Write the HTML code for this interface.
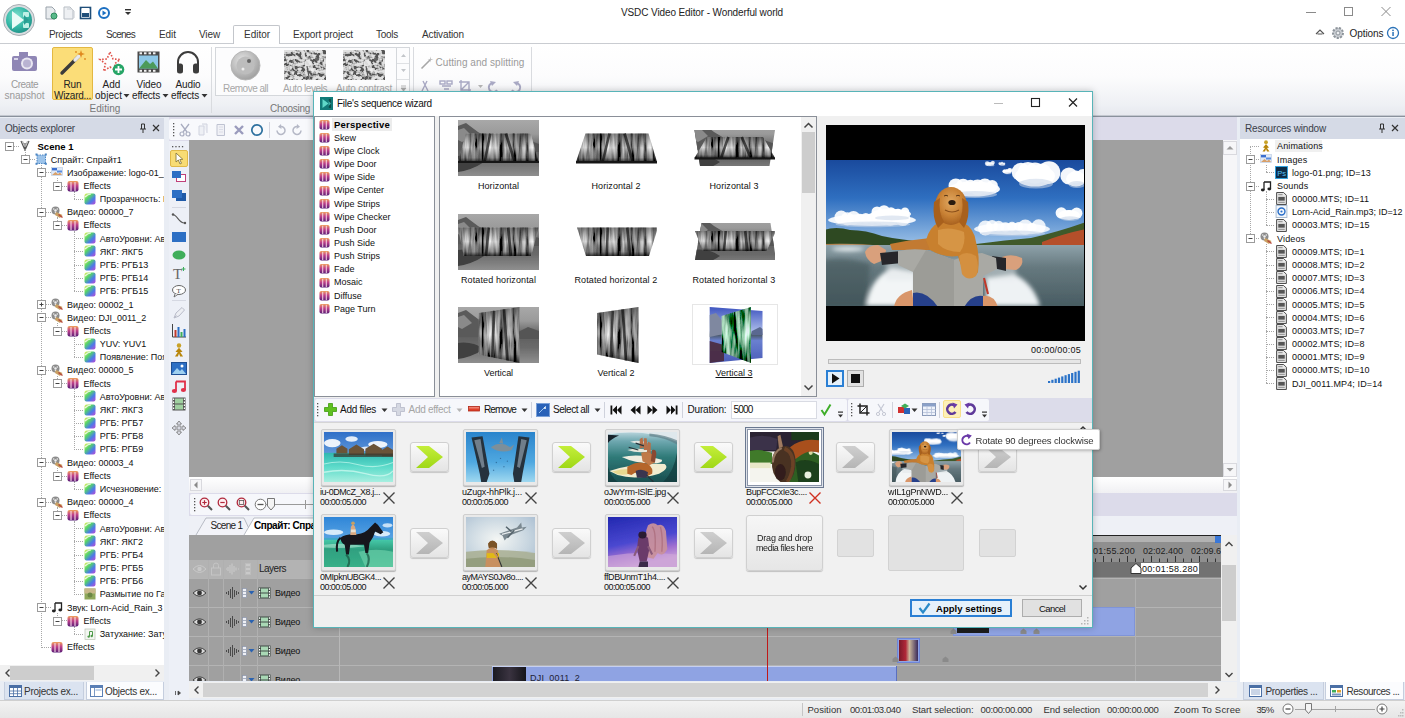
<!DOCTYPE html>
<html><head><meta charset="utf-8"><title>VSDC Video Editor - Wonderful world</title>
<style>
html,body{margin:0;padding:0}
body{width:1405px;height:718px;overflow:hidden;position:relative;background:#fff;font-family:"Liberation Sans",sans-serif;font-size:10px;color:#000}
div,span,svg{box-sizing:border-box}
svg{overflow:visible}
</style></head><body>
<svg width="0" height="0" style="position:absolute"><defs>
<pattern id="spk" width="7" height="6" patternUnits="userSpaceOnUse"><rect x="1" y="1" width="2" height="2" fill="#777"/><rect x="4" y="3" width="2" height="2" fill="#e2e2e2"/></pattern>
<linearGradient id="fxg" x1="0" y1="0" x2="0" y2="1"><stop offset="0" stop-color="#f0a35a"/><stop offset=".45" stop-color="#c0408a"/><stop offset="1" stop-color="#5a1f78"/></linearGradient><linearGradient id="clg" x1="0" y1="0" x2="1" y2="1"><stop offset="0" stop-color="#f3f36a"/><stop offset=".35" stop-color="#57d46a"/><stop offset=".65" stop-color="#4a7be8"/><stop offset="1" stop-color="#c04ad8"/></linearGradient>
<linearGradient id="ag" x1="0" y1="0" x2="0" y2="1"><stop offset="0" stop-color="#c4ee3a"/><stop offset="1" stop-color="#9fd816"/></linearGradient><linearGradient id="agg" x1="0" y1="0" x2="0" y2="1"><stop offset="0" stop-color="#cfcfcf"/><stop offset="1" stop-color="#b5b5b5"/></linearGradient>
<filter id="soft" x="-5%" y="-5%" width="110%" height="110%"><feGaussianBlur stdDeviation="0.55"/></filter><filter id="soft2" x="-5%" y="-5%" width="110%" height="110%"><feGaussianBlur stdDeviation="0.6"/></filter>
</defs></svg>
<div style="position:absolute;left:0px;top:0px;width:1405px;height:44px;background:#fff;"></div>
<div style="position:absolute;left:0px;top:44px;width:1405px;height:72px;background:linear-gradient(#fff,#fcfcfd 45%,#eef0f4 85%,#e6e8ee);"></div>
<div style="position:absolute;left:0px;top:43px;width:1405px;height:1px;background:#c9ccd1;"></div>
<div style="position:absolute;left:0px;top:115px;width:1405px;height:1px;background:#c3c7cf;"></div>
<div style="position:absolute;left:0px;top:116px;width:1405px;height:1px;background:#8a919c;"></div>
<div style="position:absolute;left:233px;top:25px;width:47px;height:19px;background:#fff;border:1px solid #c3c6cb;border-bottom:none;box-sizing:border-box;border-radius:2px 2px 0 0;"></div>
<span style="position:absolute;left:621.0px;top:6.8px;font-size:10px;line-height:12px;color:#222;white-space:nowrap;letter-spacing:-0.11px;">VSDC Video Editor - Wonderful world</span>
<span style="position:absolute;left:49.0px;top:28.8px;font-size:10px;line-height:12px;color:#333;white-space:nowrap;letter-spacing:-0.39px;">Projects</span>
<span style="position:absolute;left:106.0px;top:28.8px;font-size:10px;line-height:12px;color:#333;white-space:nowrap;letter-spacing:-0.73px;">Scenes</span>
<span style="position:absolute;left:159.0px;top:28.8px;font-size:10px;line-height:12px;color:#333;white-space:nowrap;letter-spacing:-0.06px;">Edit</span>
<span style="position:absolute;left:199.0px;top:28.8px;font-size:10px;line-height:12px;color:#333;white-space:nowrap;letter-spacing:-0.12px;">View</span>
<span style="position:absolute;left:244.0px;top:28.8px;font-size:10px;line-height:12px;color:#333;white-space:nowrap;letter-spacing:-0.02px;">Editor</span>
<span style="position:absolute;left:293.0px;top:28.8px;font-size:10px;line-height:12px;color:#333;white-space:nowrap;letter-spacing:-0.12px;">Export project</span>
<span style="position:absolute;left:376.0px;top:28.8px;font-size:10px;line-height:12px;color:#333;white-space:nowrap;letter-spacing:-0.27px;">Tools</span>
<span style="position:absolute;left:422.0px;top:28.8px;font-size:10px;line-height:12px;color:#333;white-space:nowrap;letter-spacing:-0.14px;">Activation</span>
<svg style="position:absolute;left:2px;top:3px;" width="34" height="34" viewBox="0 0 34 34"><defs><radialGradient id="lg" cx="40%" cy="35%" r="70%"><stop offset="0" stop-color="#7fe0cf"/><stop offset="0.6" stop-color="#35b8a6"/><stop offset="1" stop-color="#1f8f86"/></radialGradient></defs>
<circle cx="17" cy="17" r="15.5" fill="#d9dde0" stroke="#a9afb4"/><circle cx="17" cy="17" r="13" fill="url(#lg)"/>
<path d="M10 8 L10 26 L22 17 Z" fill="#e8fbf7"/><rect x="21" y="9" width="6" height="5" rx="1" fill="#bff0e6"/><rect x="21" y="20" width="6" height="5" rx="1" fill="#bff0e6"/><path d="M22 12 L27 17 L22 22Z" fill="#2a9d92"/></svg>
<svg style="position:absolute;left:43px;top:5px;" width="18" height="16" viewBox="0 0 18 16"><path d="M3 2 H9 L12 5 V14 H3Z" fill="#e8ebee" stroke="#9aa3ab"/><circle cx="11" cy="11" r="3" fill="#58b98a" stroke="#2f8c5e"/></svg>
<svg style="position:absolute;left:61px;top:5px;" width="18" height="16" viewBox="0 0 18 16"><path d="M3 2 H9 L12 5 V14 H3Z" fill="#eef0f3" stroke="#b7bdc4"/><path d="M6 4 H11 L13 6 V13" fill="none" stroke="#c5cad0"/></svg>
<svg style="position:absolute;left:79px;top:5px;" width="14" height="16" viewBox="0 0 14 16"><rect x="1.5" y="2.5" width="10" height="11" fill="#fff" stroke="#1f4e79" stroke-width="1.6"/><rect x="3" y="8" width="7" height="4" fill="#1f4e79"/><rect x="3" y="3" width="7" height="3" fill="#fff"/></svg>
<svg style="position:absolute;left:97px;top:5px;" width="14" height="16" viewBox="0 0 14 16"><circle cx="7" cy="8" r="5" fill="#fff" stroke="#1b6fc2" stroke-width="2"/><path d="M5.5 5.5 L9.5 8 L5.5 10.5Z" fill="#1b6fc2"/></svg>
<svg style="position:absolute;left:123px;top:7px;" width="10" height="10" viewBox="0 0 10 10"><rect x="2" y="2" width="6" height="1.4" fill="#333"/><path d="M2 5 H8 L5 8Z" fill="#333"/></svg>
<svg style="position:absolute;left:1300px;top:4px;" width="100" height="16" viewBox="0 0 100 16"><path d="M6 8.5 H16" stroke="#8a8a8a" stroke-width="1"/><rect x="44.5" y="3.5" width="8" height="8" fill="none" stroke="#8a8a8a"/><path d="M81.5 3 L90.5 12 M90.5 3 L81.5 12" stroke="#8a8a8a" stroke-width="1"/></svg>
<svg style="position:absolute;left:1314px;top:26px;" width="12" height="12" viewBox="0 0 12 12"><path d="M2 8 L6 4 L10 8 M3.5 8 H8.5" fill="none" stroke="#555" stroke-width="1.1"/></svg>
<svg style="position:absolute;left:1330px;top:25px;" width="16" height="16" viewBox="0 0 16 16"><circle cx="8" cy="8" r="5" fill="#c9cdd2" stroke="#8d949b" stroke-width="2" stroke-dasharray="2.2 1.2"/><circle cx="8" cy="8" r="2" fill="#eef0f2" stroke="#8d949b"/></svg>
<span style="position:absolute;left:1349.5px;top:27.8px;font-size:10px;line-height:12px;color:#222;white-space:nowrap;letter-spacing:-0.07px;">Options</span>
<svg style="position:absolute;left:1386px;top:26px;" width="14" height="14" viewBox="0 0 14 14"><circle cx="7" cy="7" r="5.5" fill="#fff" stroke="#2a72b8" stroke-width="1.3"/><rect x="6.3" y="6" width="1.5" height="4" fill="#2a72b8"/><circle cx="7" cy="4.3" r="0.9" fill="#2a72b8"/></svg>
<svg style="position:absolute;left:10px;top:49px;" width="30" height="26" viewBox="0 0 30 26"><rect x="2" y="7" width="25" height="15" rx="2" fill="#8f86b5"/><rect x="9" y="3" width="9" height="5" fill="#8f86b5"/><circle cx="17" cy="14.5" r="6" fill="#e9e7f2"/><circle cx="17" cy="14.5" r="4" fill="#b9b3d2"/><rect x="4" y="9" width="4" height="2" fill="#d9d6ea"/></svg>
<span style="position:absolute;left:11.0px;top:78.8px;font-size:10px;line-height:12px;color:#9a9a9a;white-space:nowrap;letter-spacing:-0.50px;">Create</span>
<span style="position:absolute;left:4.5px;top:89.8px;font-size:10px;line-height:12px;color:#9a9a9a;white-space:nowrap;letter-spacing:-0.07px;">snapshot</span>
<div style="position:absolute;left:52px;top:47px;width:41px;height:53px;background:#fbdd78;border:1px solid #e3b842;box-sizing:border-box;border-radius:2px;"></div>
<svg style="position:absolute;left:58px;top:49px;" width="30" height="28" viewBox="0 0 30 28"><path d="M4 24 L20 8" stroke="#3b3b3b" stroke-width="3.4" stroke-linecap="round"/><path d="M17 11 L21 7" stroke="#e9e9e9" stroke-width="3.4" stroke-linecap="round"/><path d="M23 1 L24 4 L27 5 L24 6 L23 9 L22 6 L19 5 L22 4Z" fill="#e08a1e"/><circle cx="18" cy="3" r="0.9" fill="#e08a1e"/><circle cx="27" cy="10" r="0.9" fill="#e08a1e"/></svg>
<span style="position:absolute;left:63.5px;top:78.8px;font-size:10px;line-height:12px;color:#222;white-space:nowrap;letter-spacing:-0.12px;">Run</span>
<span style="position:absolute;left:54.0px;top:89.8px;font-size:10px;line-height:12px;color:#222;white-space:nowrap;letter-spacing:-0.27px;">Wizard...</span>
<svg style="position:absolute;left:98px;top:50px;" width="28" height="27" viewBox="0 0 28 27"><path d="M12 2 L15 9 L22 9.5 L16.5 14 L18.5 21 L12 17 L5.5 21 L7.5 14 L2 9.5 L9 9Z" fill="none" stroke="#e0524a" stroke-width="1.6" stroke-dasharray="1.6 1.6"/><circle cx="20.5" cy="19.5" r="5.8" fill="#27a567"/><path d="M20.5 16 V23 M17 19.5 H24" stroke="#fff" stroke-width="1.8"/></svg>
<span style="position:absolute;left:102.5px;top:78.8px;font-size:10px;line-height:12px;color:#222;white-space:nowrap;letter-spacing:0.07px;">Add</span>
<span style="position:absolute;left:95.0px;top:89.8px;font-size:10px;line-height:12px;color:#222;white-space:nowrap;letter-spacing:0.05px;">object</span>
<svg style="position:absolute;left:123px;top:93px;" width="7" height="5" viewBox="0 0 7 5"><path d="M0.5 1 H6.5 L3.5 4.5Z" fill="#333"/></svg>
<svg style="position:absolute;left:137px;top:51px;" width="24" height="23" viewBox="0 0 24 23"><rect x="0.5" y="0.5" width="22" height="21" fill="#4a4a4a"/><rect x="2" y="4.5" width="19" height="13" fill="#8ec8e8"/><path d="M2 17.5 L9 9 L13 13 L16 10.5 L21 17.5Z" fill="#4c9a5a"/><g fill="#f3f3f3"><rect x="2.5" y="1.3" width="2.5" height="2"/><rect x="7" y="1.3" width="2.5" height="2"/><rect x="11.5" y="1.3" width="2.5" height="2"/><rect x="16" y="1.3" width="2.5" height="2"/><rect x="2.5" y="18.8" width="2.5" height="2"/><rect x="7" y="18.8" width="2.5" height="2"/><rect x="11.5" y="18.8" width="2.5" height="2"/><rect x="16" y="18.8" width="2.5" height="2"/></g></svg>
<span style="position:absolute;left:136.5px;top:78.8px;font-size:10px;line-height:12px;color:#222;white-space:nowrap;letter-spacing:-0.08px;">Video</span>
<span style="position:absolute;left:132.0px;top:89.8px;font-size:10px;line-height:12px;color:#222;white-space:nowrap;letter-spacing:-0.18px;">effects</span>
<svg style="position:absolute;left:162px;top:93px;" width="7" height="5" viewBox="0 0 7 5"><path d="M0.5 1 H6.5 L3.5 4.5Z" fill="#333"/></svg>
<svg style="position:absolute;left:175px;top:50px;" width="26" height="26" viewBox="0 0 26 26"><path d="M3 17 V12 A10 10 0 0 1 23 12 V17" fill="none" stroke="#3c3c3c" stroke-width="2"/><rect x="2" y="13.5" width="6" height="10" rx="2.5" fill="#3c3c3c"/><rect x="18" y="13.5" width="6" height="10" rx="2.5" fill="#3c3c3c"/></svg>
<span style="position:absolute;left:175.5px;top:78.8px;font-size:10px;line-height:12px;color:#222;white-space:nowrap;letter-spacing:-0.12px;">Audio</span>
<span style="position:absolute;left:171.0px;top:89.8px;font-size:10px;line-height:12px;color:#222;white-space:nowrap;letter-spacing:-0.18px;">effects</span>
<svg style="position:absolute;left:201px;top:93px;" width="7" height="5" viewBox="0 0 7 5"><path d="M0.5 1 H6.5 L3.5 4.5Z" fill="#333"/></svg>
<span style="position:absolute;left:89.5px;top:102.8px;font-size:10px;line-height:12px;color:#777;white-space:nowrap;letter-spacing:0.06px;">Editing</span>
<div style="position:absolute;left:211px;top:47px;width:1px;height:66px;background:#d9dbdf;"></div>
<div style="position:absolute;left:215px;top:47px;width:195px;height:49px;background:#fcfcfd;border:1px solid #d4d7db;box-sizing:border-box;"></div>
<div style="position:absolute;left:396px;top:47px;width:1px;height:49px;background:#d4d7db;"></div>
<svg style="position:absolute;left:397px;top:48px;" width="12" height="47" viewBox="0 0 12 47"><path d="M4 9 L6.5 6 L9 9Z M4 21 L9 21 L6.5 24Z" fill="#c3c6ca"/><path d="M0 15.5 H12 M0 31.5 H12" stroke="#dfe1e4"/><path d="M4 38 H9 M4 40 L9 40 L6.5 43Z" fill="#aaa" stroke="#aaa" stroke-width="0.8"/></svg>
<svg style="position:absolute;left:230px;top:50px;" width="31" height="31" viewBox="0 0 31 31"><defs><radialGradient id="rg1" cx="40%" cy="35%" r="70%"><stop offset="0" stop-color="#e6e6e6"/><stop offset="1" stop-color="#9c9c9c"/></radialGradient></defs><circle cx="15.5" cy="15.5" r="14.5" fill="url(#rg1)" stroke="#b5b5b5"/><circle cx="15.5" cy="15.5" r="9" fill="#bdbdbd"/><circle cx="19" cy="11" r="2" fill="#666"/><circle cx="13" cy="19" r="1.5" fill="#eee"/></svg>
<span style="position:absolute;left:223.0px;top:82.8px;font-size:10px;line-height:12px;color:#a8a8a8;white-space:nowrap;letter-spacing:-0.50px;">Remove all</span>
<svg width="0" height="0" style="position:absolute"><defs><filter id="grain" x="0" y="0" width="100%" height="100%"><feTurbulence type="fractalNoise" baseFrequency="0.28 0.3" numOctaves="2" seed="5" result="n"/><feColorMatrix in="n" type="matrix" values="4.5 0 0 0 -1.75  4.5 0 0 0 -1.75  4.5 0 0 0 -1.75  0 0 0 0 1" result="g"/><feComposite in="g" in2="SourceGraphic" operator="in"/></filter></defs></svg>
<svg style="position:absolute;left:284px;top:50px;overflow:hidden;" width="42" height="30" viewBox="0 0 42 30"><rect width="42" height="30" fill="#999" filter="url(#grain)"/><rect width="42" height="30" fill="#bdbdbd" opacity=".45"/><circle cx="24" cy="13" r="3.2" fill="#e9e9e9" opacity=".9"/><circle cx="33" cy="9" r="2" fill="#444" opacity=".8"/><circle cx="28" cy="20" r="1.8" fill="#eee"/><path d="M23 16 L25 27" stroke="#555" stroke-width="1.2"/></svg>
<svg style="position:absolute;left:343px;top:50px;overflow:hidden;" width="42" height="30" viewBox="0 0 42 30"><rect width="42" height="30" fill="#999" filter="url(#grain)"/><rect width="42" height="30" fill="#bdbdbd" opacity=".45"/><circle cx="24" cy="13" r="3.2" fill="#e9e9e9" opacity=".9"/><circle cx="33" cy="9" r="2" fill="#444" opacity=".8"/><circle cx="28" cy="20" r="1.8" fill="#eee"/><path d="M23 16 L25 27" stroke="#555" stroke-width="1.2"/></svg>
<span style="position:absolute;left:283.0px;top:82.8px;font-size:10px;line-height:12px;color:#a8a8a8;white-space:nowrap;letter-spacing:-0.45px;">Auto levels</span>
<span style="position:absolute;left:336.0px;top:82.8px;font-size:10px;line-height:12px;color:#a8a8a8;white-space:nowrap;letter-spacing:-0.23px;">Auto contrast</span>
<span style="position:absolute;left:270.0px;top:102.8px;font-size:10px;line-height:12px;color:#777;white-space:nowrap;letter-spacing:-0.28px;">Choosing</span>
<div style="position:absolute;left:413px;top:47px;width:1px;height:66px;background:#d9dbdf;"></div>
<svg style="position:absolute;left:420px;top:56px;" width="14" height="14" viewBox="0 0 14 14"><path d="M1.5 12.5 L10 4" stroke="#a7a7a7" stroke-width="1.6"/><path d="M10.5 0.5 L11 3 L13.5 3.5 L11 4 L10.5 6.5 L10 4 L7.5 3.5 L10 3Z" fill="#bbb"/></svg>
<span style="position:absolute;left:435.5px;top:56.8px;font-size:10px;line-height:12px;color:#9b9b9b;white-space:nowrap;letter-spacing:0.05px;">Cutting and splitting</span>
<svg style="position:absolute;left:418px;top:79px;" width="120" height="14" viewBox="0 0 120 14"><g fill="none" stroke="#a9a9c4" stroke-width="1.4"><path d="M4 12 L9 2 M10 12 L5 2"/><rect x="22" y="2" width="5" height="3"/><rect x="29" y="2" width="5" height="3"/><path d="M24 7 H33 M26 10 H31"/><path d="M43 1 V11 H53 M41 3 H51 V13 M43 11 L51 3"/><path d="M75 4 A4.5 4.5 0 1 0 79 11" stroke-width="2"/><path d="M98 4 A4.5 4.5 0 1 1 94 11" stroke-width="2"/></g><path d="M60 6 H65 L62.5 9Z" fill="#b5b5b5"/><path d="M72 2 L78 3 L74 7Z M101 2 L95 3 L99 7Z" fill="#a9a9c4"/></svg>
<div style="position:absolute;left:531px;top:47px;width:1px;height:66px;background:#d9dbdf;"></div>
<div style="position:absolute;left:0px;top:117px;width:1405px;height:583px;background:#e9edf4;"></div>
<div style="position:absolute;left:0px;top:118px;width:164px;height:21px;background:#d5dae6;"></div>
<span style="position:absolute;left:5.0px;top:123.3px;font-size:10px;line-height:12px;color:#3a3f4a;white-space:nowrap;letter-spacing:-0.18px;">Objects explorer</span>
<svg style="position:absolute;left:138px;top:122px;" width="24" height="12" viewBox="0 0 24 12"><path d="M3.5 2 V7 M6.5 2 V7 M3.5 2 H6.5 M2 7 H8 M5 7 V11" stroke="#333" stroke-width="1" fill="none"/><path d="M15 3 L21 9 M21 3 L15 9" stroke="#333" stroke-width="1.2"/></svg>
<div style="position:absolute;left:0;top:139px;width:164px;height:526px;background:#fff;overflow:hidden">
<div style="position:absolute;left:0;top:-139px;">
<div style="position:absolute;left:25px;top:152px;width:1px;height:3px;border-left:1px dotted #a8a8a8;"></div>
<div style="position:absolute;left:41px;top:165px;width:1px;height:3px;border-left:1px dotted #a8a8a8;"></div>
<div style="position:absolute;left:41px;top:176px;width:1px;height:470px;border-left:1px dotted #a8a8a8;"></div>
<div style="position:absolute;left:41.1px;top:647px;width:9.899999999999999px;height:1px;border-top:1px dotted #a8a8a8;"></div>
<div style="position:absolute;left:74px;top:191px;width:1px;height:8px;border-left:1px dotted #a8a8a8;"></div>
<div style="position:absolute;left:73.7px;top:199px;width:9.299999999999997px;height:1px;border-top:1px dotted #a8a8a8;"></div>
<div style="position:absolute;left:57px;top:178px;width:1px;height:3px;border-left:1px dotted #a8a8a8;"></div>
<div style="position:absolute;left:74px;top:231px;width:1px;height:60px;border-left:1px dotted #a8a8a8;"></div>
<div style="position:absolute;left:73.7px;top:238px;width:9.299999999999997px;height:1px;border-top:1px dotted #a8a8a8;"></div>
<div style="position:absolute;left:73.7px;top:251px;width:9.299999999999997px;height:1px;border-top:1px dotted #a8a8a8;"></div>
<div style="position:absolute;left:73.7px;top:265px;width:9.299999999999997px;height:1px;border-top:1px dotted #a8a8a8;"></div>
<div style="position:absolute;left:73.7px;top:278px;width:9.299999999999997px;height:1px;border-top:1px dotted #a8a8a8;"></div>
<div style="position:absolute;left:73.7px;top:291px;width:9.299999999999997px;height:1px;border-top:1px dotted #a8a8a8;"></div>
<div style="position:absolute;left:57px;top:217px;width:1px;height:4px;border-left:1px dotted #a8a8a8;"></div>
<div style="position:absolute;left:74px;top:336px;width:1px;height:21px;border-left:1px dotted #a8a8a8;"></div>
<div style="position:absolute;left:73.7px;top:344px;width:9.299999999999997px;height:1px;border-top:1px dotted #a8a8a8;"></div>
<div style="position:absolute;left:73.7px;top:357px;width:9.299999999999997px;height:1px;border-top:1px dotted #a8a8a8;"></div>
<div style="position:absolute;left:57px;top:323px;width:1px;height:3px;border-left:1px dotted #a8a8a8;"></div>
<div style="position:absolute;left:74px;top:389px;width:1px;height:61px;border-left:1px dotted #a8a8a8;"></div>
<div style="position:absolute;left:73.7px;top:396px;width:9.299999999999997px;height:1px;border-top:1px dotted #a8a8a8;"></div>
<div style="position:absolute;left:73.7px;top:410px;width:9.299999999999997px;height:1px;border-top:1px dotted #a8a8a8;"></div>
<div style="position:absolute;left:73.7px;top:423px;width:9.299999999999997px;height:1px;border-top:1px dotted #a8a8a8;"></div>
<div style="position:absolute;left:73.7px;top:436px;width:9.299999999999997px;height:1px;border-top:1px dotted #a8a8a8;"></div>
<div style="position:absolute;left:73.7px;top:449px;width:9.299999999999997px;height:1px;border-top:1px dotted #a8a8a8;"></div>
<div style="position:absolute;left:57px;top:376px;width:1px;height:3px;border-left:1px dotted #a8a8a8;"></div>
<div style="position:absolute;left:74px;top:481px;width:1px;height:8px;border-left:1px dotted #a8a8a8;"></div>
<div style="position:absolute;left:73.7px;top:489px;width:9.299999999999997px;height:1px;border-top:1px dotted #a8a8a8;"></div>
<div style="position:absolute;left:57px;top:468px;width:1px;height:3px;border-left:1px dotted #a8a8a8;"></div>
<div style="position:absolute;left:74px;top:521px;width:1px;height:74px;border-left:1px dotted #a8a8a8;"></div>
<div style="position:absolute;left:73.7px;top:528px;width:9.299999999999997px;height:1px;border-top:1px dotted #a8a8a8;"></div>
<div style="position:absolute;left:73.7px;top:541px;width:9.299999999999997px;height:1px;border-top:1px dotted #a8a8a8;"></div>
<div style="position:absolute;left:73.7px;top:555px;width:9.299999999999997px;height:1px;border-top:1px dotted #a8a8a8;"></div>
<div style="position:absolute;left:73.7px;top:568px;width:9.299999999999997px;height:1px;border-top:1px dotted #a8a8a8;"></div>
<div style="position:absolute;left:73.7px;top:581px;width:9.299999999999997px;height:1px;border-top:1px dotted #a8a8a8;"></div>
<div style="position:absolute;left:73.7px;top:594px;width:9.299999999999997px;height:1px;border-top:1px dotted #a8a8a8;"></div>
<div style="position:absolute;left:57px;top:507px;width:1px;height:4px;border-left:1px dotted #a8a8a8;"></div>
<div style="position:absolute;left:74px;top:626px;width:1px;height:8px;border-left:1px dotted #a8a8a8;"></div>
<div style="position:absolute;left:73.7px;top:634px;width:9.299999999999997px;height:1px;border-top:1px dotted #a8a8a8;"></div>
<div style="position:absolute;left:57px;top:613px;width:1px;height:3px;border-left:1px dotted #a8a8a8;"></div>
<div style="position:absolute;left:12.5px;top:146px;width:6.0px;height:1px;border-top:1px dotted #a8a8a8;"></div>
<svg style="position:absolute;left:4.5px;top:142.0px" width="9" height="9"><rect x="0.5" y="0.5" width="8" height="8" fill="#fff" stroke="#9b9b9b"/><path d="M2.5 4.5 H6.5" stroke="#444"/></svg>
<svg style="position:absolute;left:18.5px;top:140.0px" width="12" height="12" viewBox="0 0 12 12"><path d="M2 1 L5.5 9 M10 1 L6.5 9 M6 3 V11" stroke="#555" stroke-width="1.2" fill="none"/><path d="M3.5 1 L6 7 L8.5 1" stroke="#aaa" stroke-width="1" fill="none"/></svg>
<span style="position:absolute;left:37.5px;top:141.1px;font-size:9.5px;line-height:11.5px;color:#000;white-space:nowrap;font-weight:bold;letter-spacing:0.01px;">Scene 1</span>
<div style="position:absolute;left:28.8px;top:159px;width:5.9999999999999964px;height:1px;border-top:1px dotted #a8a8a8;"></div>
<svg style="position:absolute;left:20.8px;top:155.2px" width="9" height="9"><rect x="0.5" y="0.5" width="8" height="8" fill="#fff" stroke="#9b9b9b"/><path d="M2.5 4.5 H6.5" stroke="#444"/></svg>
<svg style="position:absolute;left:34.8px;top:153.2px" width="12" height="12" viewBox="0 0 12 12"><rect x="2" y="2" width="8.5" height="8.5" fill="#9cc3ea" stroke="#4c86c4" stroke-dasharray="1.5 1"/><rect x="0.5" y="0.5" width="2" height="2" fill="#4c86c4"/><rect x="9.8" y="0.5" width="2" height="2" fill="#4c86c4"/><rect x="0.5" y="9.8" width="2" height="2" fill="#4c86c4"/><rect x="9.8" y="9.8" width="2" height="2" fill="#4c86c4"/></svg>
<span style="position:absolute;left:50.8px;top:154.5px;font-size:9px;line-height:11px;color:#111;white-space:nowrap;">Спрайт: Спрайт1</span>
<div style="position:absolute;left:45.1px;top:172px;width:6.0px;height:1px;border-top:1px dotted #a8a8a8;"></div>
<svg style="position:absolute;left:37.1px;top:168.4px" width="9" height="9"><rect x="0.5" y="0.5" width="8" height="8" fill="#fff" stroke="#9b9b9b"/><path d="M2.5 4.5 H6.5" stroke="#444"/></svg>
<svg style="position:absolute;left:51.1px;top:166.4px" width="12" height="12" viewBox="0 0 12 12"><rect x="0.5" y="1.5" width="11" height="8" fill="#dfe9f7" stroke="#b8c8e0" stroke-width=".6"/><rect x="1" y="2" width="5" height="2.4" fill="#3a6fd0"/><rect x="6" y="4.5" width="5" height="2" fill="#5a8ee0"/><path d="M1 9 L4.5 6 L7 8 L9 6.5 L11 9Z" fill="#d8a06a"/></svg>
<span style="position:absolute;left:67.1px;top:167.7px;font-size:9px;line-height:11px;color:#111;white-space:nowrap;">Изображение: logo-01_</span>
<div style="position:absolute;left:61.400000000000006px;top:186px;width:6.0px;height:1px;border-top:1px dotted #a8a8a8;"></div>
<svg style="position:absolute;left:53.4px;top:181.5px" width="9" height="9"><rect x="0.5" y="0.5" width="8" height="8" fill="#fff" stroke="#9b9b9b"/><path d="M2.5 4.5 H6.5" stroke="#444"/></svg>
<svg style="position:absolute;left:67.4px;top:179.5px" width="12" height="12" viewBox="0 0 12 12"><rect x="0.5" y="1" width="11" height="10.5" rx="2" fill="url(#fxg)"/><path d="M4 2 V11 M8 2 V11" stroke="#f7d7e6" stroke-width="1.3" opacity=".85"/></svg>
<span style="position:absolute;left:83.4px;top:180.8px;font-size:9px;line-height:11px;color:#111;white-space:nowrap;">Effects</span>
<svg style="position:absolute;left:83.7px;top:192.7px" width="12" height="12" viewBox="0 0 12 12"><rect x="0.5" y="0.5" width="11" height="11" rx="2" fill="url(#clg)"/><path d="M1 4 Q4 1 7 1" stroke="#fff" stroke-width="1.2" fill="none" opacity=".8"/></svg>
<span style="position:absolute;left:99.7px;top:194.0px;font-size:9px;line-height:11px;color:#111;white-space:nowrap;">Прозрачность: Пр</span>
<div style="position:absolute;left:45.1px;top:212px;width:6.0px;height:1px;border-top:1px dotted #a8a8a8;"></div>
<svg style="position:absolute;left:37.1px;top:207.9px" width="9" height="9"><rect x="0.5" y="0.5" width="8" height="8" fill="#fff" stroke="#9b9b9b"/><path d="M2.5 4.5 H6.5" stroke="#444"/></svg>
<svg style="position:absolute;left:51.1px;top:205.9px" width="12" height="12" viewBox="0 0 12 12"><circle cx="4.5" cy="4.5" r="4" fill="#8c8c8c"/><circle cx="4.5" cy="4.5" r="1.2" fill="#eee"/><circle cx="2.7" cy="3" r=".8" fill="#eee"/><circle cx="6.3" cy="3" r=".8" fill="#eee"/><circle cx="4.5" cy="6.6" r=".8" fill="#eee"/><path d="M5 6 L11.5 9 L9 12 L4 9Z" fill="#c9a063"/><path d="M7.5 8.5 L11.5 11.5" stroke="#b5483a" stroke-width="1.5"/></svg>
<span style="position:absolute;left:67.1px;top:207.2px;font-size:9px;line-height:11px;color:#111;white-space:nowrap;">Видео: 00000_7</span>
<div style="position:absolute;left:61.400000000000006px;top:225px;width:6.0px;height:1px;border-top:1px dotted #a8a8a8;"></div>
<svg style="position:absolute;left:53.4px;top:221.1px" width="9" height="9"><rect x="0.5" y="0.5" width="8" height="8" fill="#fff" stroke="#9b9b9b"/><path d="M2.5 4.5 H6.5" stroke="#444"/></svg>
<svg style="position:absolute;left:67.4px;top:219.1px" width="12" height="12" viewBox="0 0 12 12"><rect x="0.5" y="1" width="11" height="10.5" rx="2" fill="url(#fxg)"/><path d="M4 2 V11 M8 2 V11" stroke="#f7d7e6" stroke-width="1.3" opacity=".85"/></svg>
<span style="position:absolute;left:83.4px;top:220.4px;font-size:9px;line-height:11px;color:#111;white-space:nowrap;">Effects</span>
<svg style="position:absolute;left:83.7px;top:232.3px" width="12" height="12" viewBox="0 0 12 12"><rect x="0.5" y="0.5" width="11" height="11" rx="2" fill="url(#clg)"/><path d="M1 4 Q4 1 7 1" stroke="#fff" stroke-width="1.2" fill="none" opacity=".8"/></svg>
<span style="position:absolute;left:99.7px;top:233.6px;font-size:9px;line-height:11px;color:#111;white-space:nowrap;">АвтоУровни: Авт</span>
<svg style="position:absolute;left:83.7px;top:245.4px" width="12" height="12" viewBox="0 0 12 12"><rect x="0.5" y="0.5" width="11" height="11" rx="2" fill="url(#clg)"/><path d="M1 4 Q4 1 7 1" stroke="#fff" stroke-width="1.2" fill="none" opacity=".8"/></svg>
<span style="position:absolute;left:99.7px;top:246.7px;font-size:9px;line-height:11px;color:#111;white-space:nowrap;">ЯКГ: ЯКГ5</span>
<svg style="position:absolute;left:83.7px;top:258.6px" width="12" height="12" viewBox="0 0 12 12"><rect x="0.5" y="0.5" width="11" height="11" rx="2" fill="url(#clg)"/><path d="M1 4 Q4 1 7 1" stroke="#fff" stroke-width="1.2" fill="none" opacity=".8"/></svg>
<span style="position:absolute;left:99.7px;top:259.9px;font-size:9px;line-height:11px;color:#111;white-space:nowrap;">РГБ: РГБ13</span>
<svg style="position:absolute;left:83.7px;top:271.8px" width="12" height="12" viewBox="0 0 12 12"><rect x="0.5" y="0.5" width="11" height="11" rx="2" fill="url(#clg)"/><path d="M1 4 Q4 1 7 1" stroke="#fff" stroke-width="1.2" fill="none" opacity=".8"/></svg>
<span style="position:absolute;left:99.7px;top:273.1px;font-size:9px;line-height:11px;color:#111;white-space:nowrap;">РГБ: РГБ14</span>
<svg style="position:absolute;left:83.7px;top:285.0px" width="12" height="12" viewBox="0 0 12 12"><rect x="0.5" y="0.5" width="11" height="11" rx="2" fill="url(#clg)"/><path d="M1 4 Q4 1 7 1" stroke="#fff" stroke-width="1.2" fill="none" opacity=".8"/></svg>
<span style="position:absolute;left:99.7px;top:286.3px;font-size:9px;line-height:11px;color:#111;white-space:nowrap;">РГБ: РГБ15</span>
<div style="position:absolute;left:45.1px;top:304px;width:6.0px;height:1px;border-top:1px dotted #a8a8a8;"></div>
<svg style="position:absolute;left:37.1px;top:300.2px" width="9" height="9"><rect x="0.5" y="0.5" width="8" height="8" fill="#fff" stroke="#9b9b9b"/><path d="M2.5 4.5 H6.5 M4.5 2.5 V6.5" stroke="#444"/></svg>
<svg style="position:absolute;left:51.1px;top:298.2px" width="12" height="12" viewBox="0 0 12 12"><circle cx="4.5" cy="4.5" r="4" fill="#8c8c8c"/><circle cx="4.5" cy="4.5" r="1.2" fill="#eee"/><circle cx="2.7" cy="3" r=".8" fill="#eee"/><circle cx="6.3" cy="3" r=".8" fill="#eee"/><circle cx="4.5" cy="6.6" r=".8" fill="#eee"/><path d="M5 6 L11.5 9 L9 12 L4 9Z" fill="#c9a063"/><path d="M7.5 8.5 L11.5 11.5" stroke="#b5483a" stroke-width="1.5"/></svg>
<span style="position:absolute;left:67.1px;top:299.5px;font-size:9px;line-height:11px;color:#111;white-space:nowrap;">Видео: 00002_1</span>
<div style="position:absolute;left:45.1px;top:317px;width:6.0px;height:1px;border-top:1px dotted #a8a8a8;"></div>
<svg style="position:absolute;left:37.1px;top:313.3px" width="9" height="9"><rect x="0.5" y="0.5" width="8" height="8" fill="#fff" stroke="#9b9b9b"/><path d="M2.5 4.5 H6.5" stroke="#444"/></svg>
<svg style="position:absolute;left:51.1px;top:311.3px" width="12" height="12" viewBox="0 0 12 12"><circle cx="4.5" cy="4.5" r="4" fill="#8c8c8c"/><circle cx="4.5" cy="4.5" r="1.2" fill="#eee"/><circle cx="2.7" cy="3" r=".8" fill="#eee"/><circle cx="6.3" cy="3" r=".8" fill="#eee"/><circle cx="4.5" cy="6.6" r=".8" fill="#eee"/><path d="M5 6 L11.5 9 L9 12 L4 9Z" fill="#c9a063"/><path d="M7.5 8.5 L11.5 11.5" stroke="#b5483a" stroke-width="1.5"/></svg>
<span style="position:absolute;left:67.1px;top:312.6px;font-size:9px;line-height:11px;color:#111;white-space:nowrap;">Видео: DJI_0011_2</span>
<div style="position:absolute;left:61.400000000000006px;top:331px;width:6.0px;height:1px;border-top:1px dotted #a8a8a8;"></div>
<svg style="position:absolute;left:53.4px;top:326.5px" width="9" height="9"><rect x="0.5" y="0.5" width="8" height="8" fill="#fff" stroke="#9b9b9b"/><path d="M2.5 4.5 H6.5" stroke="#444"/></svg>
<svg style="position:absolute;left:67.4px;top:324.5px" width="12" height="12" viewBox="0 0 12 12"><rect x="0.5" y="1" width="11" height="10.5" rx="2" fill="url(#fxg)"/><path d="M4 2 V11 M8 2 V11" stroke="#f7d7e6" stroke-width="1.3" opacity=".85"/></svg>
<span style="position:absolute;left:83.4px;top:325.8px;font-size:9px;line-height:11px;color:#111;white-space:nowrap;">Effects</span>
<svg style="position:absolute;left:83.7px;top:337.7px" width="12" height="12" viewBox="0 0 12 12"><rect x="0.5" y="0.5" width="11" height="11" rx="2" fill="url(#clg)"/><path d="M1 4 Q4 1 7 1" stroke="#fff" stroke-width="1.2" fill="none" opacity=".8"/></svg>
<span style="position:absolute;left:99.7px;top:339.0px;font-size:9px;line-height:11px;color:#111;white-space:nowrap;">YUV: YUV1</span>
<svg style="position:absolute;left:83.7px;top:350.9px" width="12" height="12" viewBox="0 0 12 12"><rect x="0.5" y="0.5" width="11" height="11" rx="2" fill="url(#clg)"/><path d="M1 4 Q4 1 7 1" stroke="#fff" stroke-width="1.2" fill="none" opacity=".8"/></svg>
<span style="position:absolute;left:99.7px;top:352.2px;font-size:9px;line-height:11px;color:#111;white-space:nowrap;">Появление: Появ</span>
<div style="position:absolute;left:45.1px;top:370px;width:6.0px;height:1px;border-top:1px dotted #a8a8a8;"></div>
<svg style="position:absolute;left:37.1px;top:366.1px" width="9" height="9"><rect x="0.5" y="0.5" width="8" height="8" fill="#fff" stroke="#9b9b9b"/><path d="M2.5 4.5 H6.5" stroke="#444"/></svg>
<svg style="position:absolute;left:51.1px;top:364.1px" width="12" height="12" viewBox="0 0 12 12"><circle cx="4.5" cy="4.5" r="4" fill="#8c8c8c"/><circle cx="4.5" cy="4.5" r="1.2" fill="#eee"/><circle cx="2.7" cy="3" r=".8" fill="#eee"/><circle cx="6.3" cy="3" r=".8" fill="#eee"/><circle cx="4.5" cy="6.6" r=".8" fill="#eee"/><path d="M5 6 L11.5 9 L9 12 L4 9Z" fill="#c9a063"/><path d="M7.5 8.5 L11.5 11.5" stroke="#b5483a" stroke-width="1.5"/></svg>
<span style="position:absolute;left:67.1px;top:365.4px;font-size:9px;line-height:11px;color:#111;white-space:nowrap;">Видео: 00000_5</span>
<div style="position:absolute;left:61.400000000000006px;top:383px;width:6.0px;height:1px;border-top:1px dotted #a8a8a8;"></div>
<svg style="position:absolute;left:53.4px;top:379.2px" width="9" height="9"><rect x="0.5" y="0.5" width="8" height="8" fill="#fff" stroke="#9b9b9b"/><path d="M2.5 4.5 H6.5" stroke="#444"/></svg>
<svg style="position:absolute;left:67.4px;top:377.2px" width="12" height="12" viewBox="0 0 12 12"><rect x="0.5" y="1" width="11" height="10.5" rx="2" fill="url(#fxg)"/><path d="M4 2 V11 M8 2 V11" stroke="#f7d7e6" stroke-width="1.3" opacity=".85"/></svg>
<span style="position:absolute;left:83.4px;top:378.5px;font-size:9px;line-height:11px;color:#111;white-space:nowrap;">Effects</span>
<svg style="position:absolute;left:83.7px;top:390.4px" width="12" height="12" viewBox="0 0 12 12"><rect x="0.5" y="0.5" width="11" height="11" rx="2" fill="url(#clg)"/><path d="M1 4 Q4 1 7 1" stroke="#fff" stroke-width="1.2" fill="none" opacity=".8"/></svg>
<span style="position:absolute;left:99.7px;top:391.7px;font-size:9px;line-height:11px;color:#111;white-space:nowrap;">АвтоУровни: Авт</span>
<svg style="position:absolute;left:83.7px;top:403.6px" width="12" height="12" viewBox="0 0 12 12"><rect x="0.5" y="0.5" width="11" height="11" rx="2" fill="url(#clg)"/><path d="M1 4 Q4 1 7 1" stroke="#fff" stroke-width="1.2" fill="none" opacity=".8"/></svg>
<span style="position:absolute;left:99.7px;top:404.9px;font-size:9px;line-height:11px;color:#111;white-space:nowrap;">ЯКГ: ЯКГ3</span>
<svg style="position:absolute;left:83.7px;top:416.8px" width="12" height="12" viewBox="0 0 12 12"><rect x="0.5" y="0.5" width="11" height="11" rx="2" fill="url(#clg)"/><path d="M1 4 Q4 1 7 1" stroke="#fff" stroke-width="1.2" fill="none" opacity=".8"/></svg>
<span style="position:absolute;left:99.7px;top:418.1px;font-size:9px;line-height:11px;color:#111;white-space:nowrap;">РГБ: РГБ7</span>
<svg style="position:absolute;left:83.7px;top:430.0px" width="12" height="12" viewBox="0 0 12 12"><rect x="0.5" y="0.5" width="11" height="11" rx="2" fill="url(#clg)"/><path d="M1 4 Q4 1 7 1" stroke="#fff" stroke-width="1.2" fill="none" opacity=".8"/></svg>
<span style="position:absolute;left:99.7px;top:431.3px;font-size:9px;line-height:11px;color:#111;white-space:nowrap;">РГБ: РГБ8</span>
<svg style="position:absolute;left:83.7px;top:443.1px" width="12" height="12" viewBox="0 0 12 12"><rect x="0.5" y="0.5" width="11" height="11" rx="2" fill="url(#clg)"/><path d="M1 4 Q4 1 7 1" stroke="#fff" stroke-width="1.2" fill="none" opacity=".8"/></svg>
<span style="position:absolute;left:99.7px;top:444.4px;font-size:9px;line-height:11px;color:#111;white-space:nowrap;">РГБ: РГБ9</span>
<div style="position:absolute;left:45.1px;top:462px;width:6.0px;height:1px;border-top:1px dotted #a8a8a8;"></div>
<svg style="position:absolute;left:37.1px;top:458.3px" width="9" height="9"><rect x="0.5" y="0.5" width="8" height="8" fill="#fff" stroke="#9b9b9b"/><path d="M2.5 4.5 H6.5" stroke="#444"/></svg>
<svg style="position:absolute;left:51.1px;top:456.3px" width="12" height="12" viewBox="0 0 12 12"><circle cx="4.5" cy="4.5" r="4" fill="#8c8c8c"/><circle cx="4.5" cy="4.5" r="1.2" fill="#eee"/><circle cx="2.7" cy="3" r=".8" fill="#eee"/><circle cx="6.3" cy="3" r=".8" fill="#eee"/><circle cx="4.5" cy="6.6" r=".8" fill="#eee"/><path d="M5 6 L11.5 9 L9 12 L4 9Z" fill="#c9a063"/><path d="M7.5 8.5 L11.5 11.5" stroke="#b5483a" stroke-width="1.5"/></svg>
<span style="position:absolute;left:67.1px;top:457.6px;font-size:9px;line-height:11px;color:#111;white-space:nowrap;">Видео: 00003_4</span>
<div style="position:absolute;left:61.400000000000006px;top:476px;width:6.0px;height:1px;border-top:1px dotted #a8a8a8;"></div>
<svg style="position:absolute;left:53.4px;top:471.5px" width="9" height="9"><rect x="0.5" y="0.5" width="8" height="8" fill="#fff" stroke="#9b9b9b"/><path d="M2.5 4.5 H6.5" stroke="#444"/></svg>
<svg style="position:absolute;left:67.4px;top:469.5px" width="12" height="12" viewBox="0 0 12 12"><rect x="0.5" y="1" width="11" height="10.5" rx="2" fill="url(#fxg)"/><path d="M4 2 V11 M8 2 V11" stroke="#f7d7e6" stroke-width="1.3" opacity=".85"/></svg>
<span style="position:absolute;left:83.4px;top:470.8px;font-size:9px;line-height:11px;color:#111;white-space:nowrap;">Effects</span>
<svg style="position:absolute;left:83.7px;top:482.7px" width="12" height="12" viewBox="0 0 12 12"><rect x="0.5" y="0.5" width="11" height="11" rx="2" fill="url(#clg)"/><path d="M1 4 Q4 1 7 1" stroke="#fff" stroke-width="1.2" fill="none" opacity=".8"/></svg>
<span style="position:absolute;left:99.7px;top:484.0px;font-size:9px;line-height:11px;color:#111;white-space:nowrap;">Исчезновение: Ис</span>
<div style="position:absolute;left:45.1px;top:502px;width:6.0px;height:1px;border-top:1px dotted #a8a8a8;"></div>
<svg style="position:absolute;left:37.1px;top:497.9px" width="9" height="9"><rect x="0.5" y="0.5" width="8" height="8" fill="#fff" stroke="#9b9b9b"/><path d="M2.5 4.5 H6.5" stroke="#444"/></svg>
<svg style="position:absolute;left:51.1px;top:495.9px" width="12" height="12" viewBox="0 0 12 12"><circle cx="4.5" cy="4.5" r="4" fill="#8c8c8c"/><circle cx="4.5" cy="4.5" r="1.2" fill="#eee"/><circle cx="2.7" cy="3" r=".8" fill="#eee"/><circle cx="6.3" cy="3" r=".8" fill="#eee"/><circle cx="4.5" cy="6.6" r=".8" fill="#eee"/><path d="M5 6 L11.5 9 L9 12 L4 9Z" fill="#c9a063"/><path d="M7.5 8.5 L11.5 11.5" stroke="#b5483a" stroke-width="1.5"/></svg>
<span style="position:absolute;left:67.1px;top:497.2px;font-size:9px;line-height:11px;color:#111;white-space:nowrap;">Видео: 00000_4</span>
<div style="position:absolute;left:61.400000000000006px;top:515px;width:6.0px;height:1px;border-top:1px dotted #a8a8a8;"></div>
<svg style="position:absolute;left:53.4px;top:511.0px" width="9" height="9"><rect x="0.5" y="0.5" width="8" height="8" fill="#fff" stroke="#9b9b9b"/><path d="M2.5 4.5 H6.5" stroke="#444"/></svg>
<svg style="position:absolute;left:67.4px;top:509.0px" width="12" height="12" viewBox="0 0 12 12"><rect x="0.5" y="1" width="11" height="10.5" rx="2" fill="url(#fxg)"/><path d="M4 2 V11 M8 2 V11" stroke="#f7d7e6" stroke-width="1.3" opacity=".85"/></svg>
<span style="position:absolute;left:83.4px;top:510.3px;font-size:9px;line-height:11px;color:#111;white-space:nowrap;">Effects</span>
<svg style="position:absolute;left:83.7px;top:522.2px" width="12" height="12" viewBox="0 0 12 12"><rect x="0.5" y="0.5" width="11" height="11" rx="2" fill="url(#clg)"/><path d="M1 4 Q4 1 7 1" stroke="#fff" stroke-width="1.2" fill="none" opacity=".8"/></svg>
<span style="position:absolute;left:99.7px;top:523.5px;font-size:9px;line-height:11px;color:#111;white-space:nowrap;">АвтоУровни: Авт</span>
<svg style="position:absolute;left:83.7px;top:535.4px" width="12" height="12" viewBox="0 0 12 12"><rect x="0.5" y="0.5" width="11" height="11" rx="2" fill="url(#clg)"/><path d="M1 4 Q4 1 7 1" stroke="#fff" stroke-width="1.2" fill="none" opacity=".8"/></svg>
<span style="position:absolute;left:99.7px;top:536.7px;font-size:9px;line-height:11px;color:#111;white-space:nowrap;">ЯКГ: ЯКГ2</span>
<svg style="position:absolute;left:83.7px;top:548.6px" width="12" height="12" viewBox="0 0 12 12"><rect x="0.5" y="0.5" width="11" height="11" rx="2" fill="url(#clg)"/><path d="M1 4 Q4 1 7 1" stroke="#fff" stroke-width="1.2" fill="none" opacity=".8"/></svg>
<span style="position:absolute;left:99.7px;top:549.9px;font-size:9px;line-height:11px;color:#111;white-space:nowrap;">РГБ: РГБ4</span>
<svg style="position:absolute;left:83.7px;top:561.8px" width="12" height="12" viewBox="0 0 12 12"><rect x="0.5" y="0.5" width="11" height="11" rx="2" fill="url(#clg)"/><path d="M1 4 Q4 1 7 1" stroke="#fff" stroke-width="1.2" fill="none" opacity=".8"/></svg>
<span style="position:absolute;left:99.7px;top:563.1px;font-size:9px;line-height:11px;color:#111;white-space:nowrap;">РГБ: РГБ5</span>
<svg style="position:absolute;left:83.7px;top:574.9px" width="12" height="12" viewBox="0 0 12 12"><rect x="0.5" y="0.5" width="11" height="11" rx="2" fill="url(#clg)"/><path d="M1 4 Q4 1 7 1" stroke="#fff" stroke-width="1.2" fill="none" opacity=".8"/></svg>
<span style="position:absolute;left:99.7px;top:576.2px;font-size:9px;line-height:11px;color:#111;white-space:nowrap;">РГБ: РГБ6</span>
<svg style="position:absolute;left:83.7px;top:588.1px" width="12" height="12" viewBox="0 0 12 12"><rect x="0.5" y="0.5" width="11" height="11" fill="#8fa85a"/><rect x="0.5" y="0.5" width="11" height="5" fill="#c9b98a"/><circle cx="6" cy="7" r="2.5" fill="#6b8745"/></svg>
<span style="position:absolute;left:99.7px;top:589.4px;font-size:9px;line-height:11px;color:#111;white-space:nowrap;">Размытие по Гау</span>
<div style="position:absolute;left:45.1px;top:607px;width:6.0px;height:1px;border-top:1px dotted #a8a8a8;"></div>
<svg style="position:absolute;left:37.1px;top:603.3px" width="9" height="9"><rect x="0.5" y="0.5" width="8" height="8" fill="#fff" stroke="#9b9b9b"/><path d="M2.5 4.5 H6.5" stroke="#444"/></svg>
<svg style="position:absolute;left:51.1px;top:601.3px" width="12" height="12" viewBox="0 0 12 12"><path d="M4 2 H10.5 V9" fill="none" stroke="#222" stroke-width="1.3"/><path d="M4 2 V10" stroke="#222" stroke-width="1.3"/><ellipse cx="2.8" cy="10" rx="1.9" ry="1.4" fill="#222"/><ellipse cx="9.3" cy="9" rx="1.9" ry="1.4" fill="#222"/></svg>
<span style="position:absolute;left:67.1px;top:602.6px;font-size:9px;line-height:11px;color:#111;white-space:nowrap;">Звук: Lorn-Acid_Rain_3</span>
<div style="position:absolute;left:61.400000000000006px;top:620px;width:6.0px;height:1px;border-top:1px dotted #a8a8a8;"></div>
<svg style="position:absolute;left:53.4px;top:616.5px" width="9" height="9"><rect x="0.5" y="0.5" width="8" height="8" fill="#fff" stroke="#9b9b9b"/><path d="M2.5 4.5 H6.5" stroke="#444"/></svg>
<svg style="position:absolute;left:67.4px;top:614.5px" width="12" height="12" viewBox="0 0 12 12"><rect x="0.5" y="1" width="11" height="10.5" rx="2" fill="url(#fxg)"/><path d="M4 2 V11 M8 2 V11" stroke="#f7d7e6" stroke-width="1.3" opacity=".85"/></svg>
<span style="position:absolute;left:83.4px;top:615.8px;font-size:9px;line-height:11px;color:#111;white-space:nowrap;">Effects</span>
<svg style="position:absolute;left:83.7px;top:627.7px" width="12" height="12" viewBox="0 0 12 12"><rect x="1" y="1" width="10" height="10.5" fill="#f3f6f1" stroke="#b9c3b2" stroke-width=".7"/><path d="M5.5 3.5 H8.5 V8" fill="none" stroke="#4f9a4a" stroke-width="1"/><path d="M5.5 3.5 V8.5" stroke="#4f9a4a"/><circle cx="4.7" cy="8.6" r="1.2" fill="#4f9a4a"/><circle cx="7.7" cy="8" r="1.2" fill="#4f9a4a"/></svg>
<span style="position:absolute;left:99.7px;top:629.0px;font-size:9px;line-height:11px;color:#111;white-space:nowrap;">Затухание: Зату</span>
<svg style="position:absolute;left:51.1px;top:640.8px" width="12" height="12" viewBox="0 0 12 12"><rect x="0.5" y="1" width="11" height="10.5" rx="2" fill="url(#fxg)"/><path d="M4 2 V11 M8 2 V11" stroke="#f7d7e6" stroke-width="1.3" opacity=".85"/></svg>
<span style="position:absolute;left:67.1px;top:642.1px;font-size:9px;line-height:11px;color:#111;white-space:nowrap;">Effects</span>
</div></div>
<div style="position:absolute;left:0px;top:665px;width:164px;height:16px;background:#f0f0f0;"></div>
<div style="position:absolute;left:10px;top:666px;width:84px;height:14px;background:#cdcdcd;"></div>
<svg style="position:absolute;left:3px;top:668px;" width="10" height="10" viewBox="0 0 10 10"><path d="M6.5 1.5 L3 5 L6.5 8.5" fill="none" stroke="#444" stroke-width="1.4"/></svg>
<svg style="position:absolute;left:152px;top:668px;" width="10" height="10" viewBox="0 0 10 10"><path d="M3.5 1.5 L7 5 L3.5 8.5" fill="none" stroke="#444" stroke-width="1.4"/></svg>
<div style="position:absolute;left:4px;top:682px;width:80px;height:18px;background:#dbe3f0;border:1px solid #c5cede;border-top:none;"></div>
<div style="position:absolute;left:86px;top:682px;width:78px;height:18px;background:#fbfcfe;border:1px solid #c5cede;border-top:none;"></div>
<svg style="position:absolute;left:9px;top:685px;" width="13" height="12" viewBox="0 0 13 12"><rect x="0.5" y="0.5" width="12" height="11" fill="#fff" stroke="#4a6fa5"/><rect x="0.5" y="0.5" width="12" height="2.5" fill="#4a6fa5"/><path d="M4.5 3 V11 M8.5 3 V11 M1 6 H12 M1 8.7 H12" stroke="#4a6fa5" stroke-width=".8"/></svg>
<span style="position:absolute;left:24.0px;top:685.8px;font-size:10px;line-height:12px;color:#333;white-space:nowrap;letter-spacing:-0.27px;">Projects ex...</span>
<svg style="position:absolute;left:90px;top:685px;" width="13" height="12" viewBox="0 0 13 12"><rect x="0.5" y="0.5" width="12" height="11" fill="#fff" stroke="#5a7fb5"/><rect x="0.5" y="0.5" width="12" height="2.5" fill="#5a7fb5"/><path d="M4.5 3 V11" stroke="#5a7fb5" stroke-width=".8"/><rect x="5.5" y="4" width="6" height="2" fill="#c5d5ea"/></svg>
<span style="position:absolute;left:105.0px;top:685.8px;font-size:10px;line-height:12px;color:#333;white-space:nowrap;letter-spacing:-0.28px;">Objects ex...</span>
<div style="position:absolute;left:169px;top:117px;width:1068px;height:24px;background:#dcdbea;"></div>
<div style="position:absolute;left:169px;top:119px;width:148px;height:21px;background:#f8f9fc;border-radius:2px;"></div>
<svg style="position:absolute;left:172px;top:122px;" width="4" height="16" viewBox="0 0 4 16"><g fill="#555"><rect x="1" y="1" width="1.3" height="1.3"/><rect x="1" y="4" width="1.3" height="1.3"/><rect x="1" y="7" width="1.3" height="1.3"/><rect x="1" y="10" width="1.3" height="1.3"/><rect x="1" y="13" width="1.3" height="1.3"/></g></svg>
<svg style="position:absolute;left:179px;top:123px;" width="12" height="14" viewBox="0 0 12 14"><path d="M2 1 L8 9 M10 1 L4 9" stroke="#a9adc0" stroke-width="1.3" fill="none"/><circle cx="3" cy="11" r="2" fill="none" stroke="#a9adc0" stroke-width="1.2"/><circle cx="9" cy="11" r="2" fill="none" stroke="#a9adc0" stroke-width="1.2"/></svg>
<svg style="position:absolute;left:197px;top:123px;" width="12" height="14" viewBox="0 0 12 14"><path d="M2 3 H7 V12 H2Z M5 1 H10 V10" fill="#eef0f5" stroke="#d0d3df"/></svg>
<svg style="position:absolute;left:215px;top:123px;" width="12" height="14" viewBox="0 0 12 14"><path d="M2 1.5 H9.5 V12.5 H2Z" fill="#f0f1f6" stroke="#bfc3d2"/><path d="M4 4 H8 M4 6.5 H8 M4 9 H8" stroke="#d5d8e3" stroke-width=".8"/></svg>
<svg style="position:absolute;left:233px;top:124px;" width="12" height="12" viewBox="0 0 12 12"><path d="M2 2 L10 10 M10 2 L2 10" stroke="#9a9bbd" stroke-width="2.4"/></svg>
<svg style="position:absolute;left:250px;top:123px;" width="14" height="14" viewBox="0 0 14 14"><circle cx="7" cy="7" r="5.2" fill="none" stroke="#2b6f9e" stroke-width="1.7"/></svg>
<div style="position:absolute;left:269px;top:122px;width:1px;height:16px;background:#d4d6e0;"></div>
<svg style="position:absolute;left:274px;top:123px;" width="12" height="14" viewBox="0 0 12 14"><path d="M3 7.5 A4 4 0 1 0 6.5 3.5" fill="none" stroke="#b5b8c6" stroke-width="1.5"/><path d="M7 1 L4 3.8 L7.5 6Z" fill="#b5b8c6"/></svg>
<svg style="position:absolute;left:292px;top:123px;" width="12" height="14" viewBox="0 0 12 14"><path d="M9 7.5 A4 4 0 1 1 5.5 3.5" fill="none" stroke="#b5b8c6" stroke-width="1.5"/><path d="M5 1 L8 3.8 L4.5 6Z" fill="#b5b8c6"/></svg>
<div style="position:absolute;left:169px;top:141px;width:20px;height:559px;background:#edf0f7;"></div>
<svg style="position:absolute;left:171px;top:145px;" width="16" height="4" viewBox="0 0 16 4"><g fill="#555"><rect x="1" y="1" width="1.3" height="1.3"/><rect x="4.3" y="1" width="1.3" height="1.3"/><rect x="7.6" y="1" width="1.3" height="1.3"/><rect x="10.9" y="1" width="1.3" height="1.3"/></g></svg>
<div style="position:absolute;left:170px;top:150px;width:18px;height:17px;background:#f8dc74;border:1px solid #e0b94a;border-radius:2px;"></div>
<svg style="position:absolute;left:174px;top:152px;" width="10" height="14" viewBox="0 0 10 14"><path d="M2 1 L2 10 L4.3 8 L6 12 L7.5 11.3 L5.8 7.5 L8.8 7.3Z" fill="#fff" stroke="#8a7a3a" stroke-width=".9"/></svg>
<svg style="position:absolute;left:171px;top:170px;" width="16" height="14" viewBox="0 0 16 14"><rect x="5.5" y="4.5" width="9" height="7" fill="#fff" stroke="#c0407a" stroke-width="1"/><rect x="1" y="1" width="9" height="7" fill="#2d6fc4"/></svg>
<svg style="position:absolute;left:171px;top:189px;" width="16" height="14" viewBox="0 0 16 14"><rect x="5" y="4" width="10" height="8" fill="#1f5aa8"/><rect x="1" y="1" width="10" height="8" fill="#2d6fc4"/></svg>
<div style="position:absolute;left:172px;top:207px;width:14px;height:1px;background:#d5d8e2;"></div>
<svg style="position:absolute;left:171px;top:212px;" width="16" height="14" viewBox="0 0 16 14"><path d="M1.5 2.5 C6 2 8 12 14 11" fill="none" stroke="#555" stroke-width="1.1"/><circle cx="2" cy="2.5" r="1.2" fill="#555"/><circle cx="14" cy="11" r="1.2" fill="#555"/></svg>
<div style="position:absolute;left:172px;top:232px;width:14px;height:10px;background:#2d6fc4;"></div>
<svg style="position:absolute;left:171px;top:249px;" width="16" height="12" viewBox="0 0 16 12"><ellipse cx="8" cy="6" rx="6.5" ry="4.5" fill="#3fae5a"/></svg>
<svg style="position:absolute;left:171px;top:266px;" width="16" height="14" viewBox="0 0 16 14"><text x="2" y="13" font-size="15" font-family="Liberation Serif,serif" fill="#666">T</text><path d="M12.5 1 V5 M10.5 3 H14.5" stroke="#3fae5a" stroke-width="1"/></svg>
<svg style="position:absolute;left:171px;top:284px;" width="16" height="14" viewBox="0 0 16 14"><ellipse cx="8" cy="6" rx="6.5" ry="4.5" fill="#fff" stroke="#666"/><path d="M4 10 L3 13 L7 10.3" fill="#fff" stroke="#666" stroke-width=".9"/><text x="5.5" y="9" font-size="7" font-family="Liberation Serif,serif" fill="#444">T</text></svg>
<div style="position:absolute;left:172px;top:300px;width:14px;height:1px;background:#d5d8e2;"></div>
<svg style="position:absolute;left:171px;top:306px;" width="16" height="14" viewBox="0 0 16 14"><path d="M3 12 L5 7 L11 1.5 L13.5 4 L8 10Z M3 12 L5.5 9.5" fill="#eceef3" stroke="#b9bcc9" stroke-width="1"/></svg>
<svg style="position:absolute;left:171px;top:324px;" width="16" height="14" viewBox="0 0 16 14"><path d="M1.5 0 V13 H15" stroke="#444" fill="none"/><rect x="3.5" y="6" width="2" height="7" fill="#c0392b"/><rect x="6.5" y="3" width="2" height="10" fill="#2d6fc4"/><rect x="9.5" y="8" width="2" height="5" fill="#3fae5a"/><rect x="12.5" y="5" width="2" height="8" fill="#2d6fc4"/></svg>
<svg style="position:absolute;left:172px;top:343px" width="14" height="14" viewBox="0 0 12 12"><circle cx="6" cy="2.2" r="1.9" fill="#c9a227"/><path d="M6 4 L3 7.5 L5 8 L2.5 11.5 H5 L6 9 L7 11.5 H9.5 L7 8 L9 7.5Z" fill="#b8860b"/></svg>
<svg style="position:absolute;left:171px;top:362px;" width="16" height="13" viewBox="0 0 16 13"><rect x="0.5" y="0.5" width="15" height="12" fill="#2d6fc4" stroke="#1f4f94"/><path d="M1 12 L6 6 L9 9 L11 7 L15 12Z" fill="#9fd0f0"/><circle cx="11" cy="4" r="1.5" fill="#fff"/></svg>
<svg style="position:absolute;left:171px;top:379px;" width="16" height="15" viewBox="0 0 16 15"><path d="M5 2.5 H14 V11" fill="none" stroke="#e0304a" stroke-width="1.8"/><path d="M5 2.5 V12" stroke="#e0304a" stroke-width="1.8"/><ellipse cx="3.4" cy="12" rx="2.6" ry="2" fill="#e0304a"/><ellipse cx="12.4" cy="11" rx="2.6" ry="2" fill="#e0304a"/></svg>
<svg style="position:absolute;left:172px;top:397px;" width="14" height="14" viewBox="0 0 14 14"><rect x="0.5" y="0.5" width="13" height="13" fill="#555"/><rect x="3" y="1.5" width="8" height="5" fill="#9fd0a0"/><rect x="3" y="7.5" width="8" height="5" fill="#9fd0a0"/><g fill="#fff"><rect x="1" y="1.5" width="1.2" height="1.5"/><rect x="1" y="4.5" width="1.2" height="1.5"/><rect x="1" y="7.5" width="1.2" height="1.5"/><rect x="1" y="10.5" width="1.2" height="1.5"/><rect x="11.8" y="1.5" width="1.2" height="1.5"/><rect x="11.8" y="4.5" width="1.2" height="1.5"/><rect x="11.8" y="7.5" width="1.2" height="1.5"/><rect x="11.8" y="10.5" width="1.2" height="1.5"/></g></svg>
<svg style="position:absolute;left:171px;top:420px;" width="16" height="16" viewBox="0 0 16 16"><path d="M8 1 L10.5 4 H9 V7 H12 V5.5 L15 8 L12 10.5 V9 H9 V12 H10.5 L8 15 L5.5 12 H7 V9 H4 V10.5 L1 8 L4 5.5 V7 H7 V4 H5.5Z" fill="#d8dae3" stroke="#777" stroke-width=".8"/></svg>
<svg style="position:absolute;left:174px;top:689px;" width="10" height="8" viewBox="0 0 10 8"><path d="M1.5 2 V6 M4 2 L6.5 4 L4 6Z" stroke="#444" fill="#444" stroke-width=".8"/></svg>
<div style="position:absolute;left:189px;top:140px;width:1034px;height:337px;background:#a0a0a0;"></div>
<div style="position:absolute;left:1223px;top:140px;width:14px;height:337px;background:#f6f6f8;"></div>
<svg style="position:absolute;left:1223px;top:141px;" width="14" height="14" viewBox="0 0 14 14"><rect x="0.5" y="0.5" width="13" height="13" fill="#f6f6f8" stroke="#d9d9de"/><path d="M3.5 8.5 L7 5 L10.5 8.5Z" fill="#9a9a9a"/></svg>
<svg style="position:absolute;left:1223px;top:463px;" width="14" height="14" viewBox="0 0 14 14"><rect x="0.5" y="0.5" width="13" height="13" fill="#f6f6f8" stroke="#d9d9de"/><path d="M3.5 5 L10.5 5 L7 8.5Z" fill="#9a9a9a"/></svg>
<div style="position:absolute;left:189px;top:477px;width:1048px;height:16px;background:linear-gradient(#fff,#f0f0f3);"></div>
<svg style="position:absolute;left:190px;top:479px;" width="12" height="12" viewBox="0 0 12 12"><rect x="0.5" y="0.5" width="11" height="11" fill="#f6f6f8" stroke="#d9d9de"/><path d="M7.5 2.5 L4 6 L7.5 9.5Z" fill="#8a8a8a"/></svg>
<svg style="position:absolute;left:1223px;top:479px;" width="14" height="12" viewBox="0 0 14 12"><rect x="0.5" y="0.5" width="13" height="11" fill="#f6f6f8" stroke="#d9d9de"/><path d="M5.5 2.5 L9 6 L5.5 9.5Z" fill="#8a8a8a"/></svg>
<div style="position:absolute;left:189px;top:493px;width:1048px;height:23px;background:#dcdbea;"></div>
<div style="position:absolute;left:190px;top:494px;width:125px;height:21px;background:#f6f7fb;border-radius:2px;"></div>
<svg style="position:absolute;left:193px;top:497px;" width="4" height="16" viewBox="0 0 4 16"><g fill="#555"><rect x="1" y="1" width="1.3" height="1.3"/><rect x="1" y="4" width="1.3" height="1.3"/><rect x="1" y="7" width="1.3" height="1.3"/><rect x="1" y="10" width="1.3" height="1.3"/><rect x="1" y="13" width="1.3" height="1.3"/></g></svg>
<svg style="position:absolute;left:199px;top:497px;" width="14" height="14" viewBox="0 0 14 14"><circle cx="5.5" cy="5.5" r="4.3" fill="#fdeef0" stroke="#b0283c" stroke-width="1.3"/><path d="M8.8 8.8 L13 13" stroke="#555" stroke-width="2"/><path d="M3.3 5.5 H7.7 M5.5 3.3 V7.7" stroke="#b0283c" stroke-width="1.2"/></svg>
<svg style="position:absolute;left:217px;top:497px;" width="14" height="14" viewBox="0 0 14 14"><circle cx="5.5" cy="5.5" r="4.3" fill="#fdeef0" stroke="#b0283c" stroke-width="1.3"/><path d="M8.8 8.8 L13 13" stroke="#555" stroke-width="2"/><path d="M3.3 5.5 H7.7" stroke="#b0283c" stroke-width="1.2"/></svg>
<svg style="position:absolute;left:236px;top:497px;" width="14" height="14" viewBox="0 0 14 14"><circle cx="5.5" cy="5.5" r="4.3" fill="#fdeef0" stroke="#b0283c" stroke-width="1.3"/><path d="M8.8 8.8 L13 13" stroke="#555" stroke-width="2"/><rect x="3.3" y="3.5" width="4.4" height="4" fill="none" stroke="#555" stroke-width=".8"/></svg>
<svg style="position:absolute;left:254px;top:498px;" width="14" height="13" viewBox="0 0 14 13"><circle cx="6.5" cy="6.5" r="5.3" fill="#fff" stroke="#777"/><path d="M3.5 6.5 H9.5" stroke="#555" stroke-width="1.3"/></svg>
<div style="position:absolute;left:266px;top:504px;width:48px;height:1px;background:#9a9a9a;"></div>
<svg style="position:absolute;left:267px;top:498px;" width="9" height="13" viewBox="0 0 9 13"><path d="M0.5 0.5 H7.5 V8 L4 12 L0.5 8Z" fill="#f4f4f4" stroke="#777"/></svg>
<div style="position:absolute;left:305px;top:500px;width:1px;height:9px;background:#999;"></div>
<div style="position:absolute;left:189px;top:516px;width:1048px;height:19px;background:#eef0f6;"></div>
<svg style="position:absolute;left:196px;top:517px;" width="120" height="18" viewBox="0 0 120 18"><path d="M0 18 L10 1 H48 L56 18" fill="#f2f3f8" stroke="#a9adb8" stroke-width=".8"/><path d="M48 18 L58 1 H125 V18" fill="#fff" stroke="#a9adb8" stroke-width=".8"/></svg>
<span style="position:absolute;left:210.5px;top:520.3px;font-size:10px;line-height:12px;color:#222;white-space:nowrap;letter-spacing:-0.67px;">Scene 1</span>
<span style="position:absolute;left:254.0px;top:520.3px;font-size:10px;line-height:12px;color:#000;white-space:nowrap;font-weight:bold;letter-spacing:-0.44px;">Спрайт: Спрайт1</span>
<div style="position:absolute;left:189px;top:535px;width:1032px;height:146px;background:#a0a0a0;"></div>
<div style="position:absolute;left:340px;top:535px;width:881px;height:43px;background:#8f8f8f;"></div>
<div style="position:absolute;left:340px;top:536px;width:881px;height:6px;background:#b2b2b2;"></div>
<div style="position:absolute;left:340px;top:562px;width:881px;height:15px;background:#727272;"></div>
<div style="position:absolute;left:340px;top:535px;width:881px;height:1px;background:#222;"></div>
<div style="position:absolute;left:189px;top:560px;width:151px;height:18px;background:#b3b3b3;"></div>
<div style="position:absolute;left:189px;top:578px;width:1032px;height:1px;background:#b4b4b4;"></div>
<div style="position:absolute;left:189px;top:607px;width:1032px;height:1px;background:#b4b4b4;"></div>
<div style="position:absolute;left:189px;top:636px;width:1032px;height:1px;background:#b4b4b4;"></div>
<div style="position:absolute;left:189px;top:665px;width:1032px;height:1px;background:#b4b4b4;"></div>
<div style="position:absolute;left:208px;top:560px;width:1px;height:121px;background:#b0b0b0;"></div>
<div style="position:absolute;left:223px;top:560px;width:1px;height:121px;background:#b0b0b0;"></div>
<div style="position:absolute;left:240px;top:560px;width:1px;height:121px;background:#b0b0b0;"></div>
<div style="position:absolute;left:257px;top:560px;width:1px;height:121px;background:#b0b0b0;"></div>
<div style="position:absolute;left:339px;top:535px;width:1px;height:146px;background:#b8b8b8;"></div>
<div style="position:absolute;left:1135px;top:578px;width:1px;height:103px;background:#b0b0b0;"></div>
<svg style="position:absolute;left:192px;top:563px;" width="15" height="12" viewBox="0 0 15 12"><path d="M1 6 Q7.5 -1 14 6 Q7.5 13 1 6Z" fill="none" stroke="#c9c9c9" stroke-width="1"/><circle cx="7.5" cy="6" r="2.2" fill="#c9c9c9"/></svg>
<svg style="position:absolute;left:210px;top:562px;" width="12" height="14" viewBox="0 0 12 14"><rect x="1.5" y="6" width="9" height="7" fill="none" stroke="#c5c5c5"/><path d="M3.5 6 V3.5 A2.5 2.5 0 0 1 8.5 3.5 V6" fill="none" stroke="#c5c5c5"/></svg>
<svg style="position:absolute;left:225px;top:563px;" width="14" height="12" viewBox="0 0 14 12"><path d="M1 6 H2 M3 4 V8 M5 2 V10 M7 0.5 V11.5 M9 3 V9 M11 4.5 V7.5 M13 6 H14" stroke="#c9c9c9" stroke-width="1.1"/></svg>
<svg style="position:absolute;left:244px;top:563px;" width="8" height="12" viewBox="0 0 8 12"><rect x="1.5" y="0.5" width="5" height="11" fill="#c9c9c9" stroke="#bdbdbd"/><path d="M2 4 H6 M2 8 H6" stroke="#aaa"/></svg>
<span style="position:absolute;left:259.0px;top:563.3px;font-size:10px;line-height:12px;color:#222;white-space:nowrap;letter-spacing:-0.50px;">Layers</span>
<svg style="position:absolute;left:192px;top:587.5px;" width="15" height="10" viewBox="0 0 15 10"><path d="M1 5 Q7.5 -1.5 14 5 Q7.5 11.5 1 5Z" fill="#d9d9d9" stroke="#444" stroke-width="1"/><circle cx="7.5" cy="5" r="2.4" fill="#333"/></svg>
<svg style="position:absolute;left:225px;top:586.5px;" width="14" height="12" viewBox="0 0 14 12"><path shape-rendering="crispEdges" d="M1.5 5 V7 M3.5 4 V8 M5.5 1.5 V10.5 M7.5 0 V12 M9.5 2.5 V9.5 M11.5 4 V8 M13.5 5 V7" stroke="#4a4a4a" stroke-width="1"/></svg>
<svg style="position:absolute;left:242px;top:587.5px;" width="14" height="10" viewBox="0 0 14 10"><rect x="0.5" y="0.5" width="4" height="9" fill="#eef0f6" stroke="#8a93a8" stroke-width=".7"/><path d="M1 3.5 H4 M1 6.5 H4" stroke="#8a93a8" stroke-width=".7"/><path d="M6.5 3 H12.5 L9.5 6.5Z" fill="#2a62b0"/></svg>
<svg style="position:absolute;left:258px;top:586.5px;" width="13" height="12" viewBox="0 0 13 12"><rect x="0.5" y="0.5" width="12" height="11" fill="#3f4a45"/><rect x="3" y="1.5" width="7" height="4" fill="#a9d8b5"/><rect x="3" y="6.5" width="7" height="4" fill="#a9d8b5"/><g fill="#fff"><rect x="1" y="1.3" width="1.2" height="1.5"/><rect x="1" y="4" width="1.2" height="1.5"/><rect x="1" y="6.7" width="1.2" height="1.5"/><rect x="1" y="9.3" width="1.2" height="1.5"/><rect x="10.8" y="1.3" width="1.2" height="1.5"/><rect x="10.8" y="4" width="1.2" height="1.5"/><rect x="10.8" y="6.7" width="1.2" height="1.5"/><rect x="10.8" y="9.3" width="1.2" height="1.5"/></g></svg>
<span style="position:absolute;left:275.0px;top:587.8px;font-size:9px;line-height:11px;color:#111;white-space:nowrap;letter-spacing:-0.26px;">Видео</span>
<svg style="position:absolute;left:192px;top:616.5px;" width="15" height="10" viewBox="0 0 15 10"><path d="M1 5 Q7.5 -1.5 14 5 Q7.5 11.5 1 5Z" fill="#d9d9d9" stroke="#444" stroke-width="1"/><circle cx="7.5" cy="5" r="2.4" fill="#333"/></svg>
<svg style="position:absolute;left:225px;top:615.5px;" width="14" height="12" viewBox="0 0 14 12"><path shape-rendering="crispEdges" d="M1.5 5 V7 M3.5 4 V8 M5.5 1.5 V10.5 M7.5 0 V12 M9.5 2.5 V9.5 M11.5 4 V8 M13.5 5 V7" stroke="#4a4a4a" stroke-width="1"/></svg>
<svg style="position:absolute;left:242px;top:616.5px;" width="14" height="10" viewBox="0 0 14 10"><rect x="0.5" y="0.5" width="4" height="9" fill="#eef0f6" stroke="#8a93a8" stroke-width=".7"/><path d="M1 3.5 H4 M1 6.5 H4" stroke="#8a93a8" stroke-width=".7"/><path d="M6.5 3 H12.5 L9.5 6.5Z" fill="#2a62b0"/></svg>
<svg style="position:absolute;left:258px;top:615.5px;" width="13" height="12" viewBox="0 0 13 12"><rect x="0.5" y="0.5" width="12" height="11" fill="#3f4a45"/><rect x="3" y="1.5" width="7" height="4" fill="#a9d8b5"/><rect x="3" y="6.5" width="7" height="4" fill="#a9d8b5"/><g fill="#fff"><rect x="1" y="1.3" width="1.2" height="1.5"/><rect x="1" y="4" width="1.2" height="1.5"/><rect x="1" y="6.7" width="1.2" height="1.5"/><rect x="1" y="9.3" width="1.2" height="1.5"/><rect x="10.8" y="1.3" width="1.2" height="1.5"/><rect x="10.8" y="4" width="1.2" height="1.5"/><rect x="10.8" y="6.7" width="1.2" height="1.5"/><rect x="10.8" y="9.3" width="1.2" height="1.5"/></g></svg>
<span style="position:absolute;left:275.0px;top:616.8px;font-size:9px;line-height:11px;color:#111;white-space:nowrap;letter-spacing:-0.26px;">Видео</span>
<svg style="position:absolute;left:192px;top:645.5px;" width="15" height="10" viewBox="0 0 15 10"><path d="M1 5 Q7.5 -1.5 14 5 Q7.5 11.5 1 5Z" fill="#d9d9d9" stroke="#444" stroke-width="1"/><circle cx="7.5" cy="5" r="2.4" fill="#333"/></svg>
<svg style="position:absolute;left:225px;top:644.5px;" width="14" height="12" viewBox="0 0 14 12"><path shape-rendering="crispEdges" d="M1.5 5 V7 M3.5 4 V8 M5.5 1.5 V10.5 M7.5 0 V12 M9.5 2.5 V9.5 M11.5 4 V8 M13.5 5 V7" stroke="#4a4a4a" stroke-width="1"/></svg>
<svg style="position:absolute;left:242px;top:645.5px;" width="14" height="10" viewBox="0 0 14 10"><rect x="0.5" y="0.5" width="4" height="9" fill="#eef0f6" stroke="#8a93a8" stroke-width=".7"/><path d="M1 3.5 H4 M1 6.5 H4" stroke="#8a93a8" stroke-width=".7"/><path d="M6.5 3 H12.5 L9.5 6.5Z" fill="#2a62b0"/></svg>
<svg style="position:absolute;left:258px;top:644.5px;" width="13" height="12" viewBox="0 0 13 12"><rect x="0.5" y="0.5" width="12" height="11" fill="#3f4a45"/><rect x="3" y="1.5" width="7" height="4" fill="#a9d8b5"/><rect x="3" y="6.5" width="7" height="4" fill="#a9d8b5"/><g fill="#fff"><rect x="1" y="1.3" width="1.2" height="1.5"/><rect x="1" y="4" width="1.2" height="1.5"/><rect x="1" y="6.7" width="1.2" height="1.5"/><rect x="1" y="9.3" width="1.2" height="1.5"/><rect x="10.8" y="1.3" width="1.2" height="1.5"/><rect x="10.8" y="4" width="1.2" height="1.5"/><rect x="10.8" y="6.7" width="1.2" height="1.5"/><rect x="10.8" y="9.3" width="1.2" height="1.5"/></g></svg>
<span style="position:absolute;left:275.0px;top:645.8px;font-size:9px;line-height:11px;color:#111;white-space:nowrap;letter-spacing:-0.26px;">Видео</span>
<div style="position:absolute;left:189px;top:666px;width:151px;height:15px;overflow:hidden"><div style="position:absolute;left:-189px;top:-666px">
<svg style="position:absolute;left:192px;top:674.5px;" width="15" height="10" viewBox="0 0 15 10"><path d="M1 5 Q7.5 -1.5 14 5 Q7.5 11.5 1 5Z" fill="#d9d9d9" stroke="#444" stroke-width="1"/><circle cx="7.5" cy="5" r="2.4" fill="#333"/></svg>
<svg style="position:absolute;left:242px;top:674.5px;" width="14" height="10" viewBox="0 0 14 10"><rect x="0.5" y="0.5" width="4" height="9" fill="#eef0f6" stroke="#8a93a8" stroke-width=".7"/><path d="M1 3.5 H4 M1 6.5 H4" stroke="#8a93a8" stroke-width=".7"/><path d="M6.5 3 H12.5 L9.5 6.5Z" fill="#2a62b0"/></svg>
<svg style="position:absolute;left:258px;top:673.5px;" width="13" height="12" viewBox="0 0 13 12"><rect x="0.5" y="0.5" width="12" height="11" fill="#3f4a45"/><rect x="3" y="1.5" width="7" height="4" fill="#a9d8b5"/><rect x="3" y="6.5" width="7" height="4" fill="#a9d8b5"/><g fill="#fff"><rect x="1" y="1.3" width="1.2" height="1.5"/><rect x="1" y="4" width="1.2" height="1.5"/><rect x="1" y="6.7" width="1.2" height="1.5"/><rect x="1" y="9.3" width="1.2" height="1.5"/><rect x="10.8" y="1.3" width="1.2" height="1.5"/><rect x="10.8" y="4" width="1.2" height="1.5"/><rect x="10.8" y="6.7" width="1.2" height="1.5"/><rect x="10.8" y="9.3" width="1.2" height="1.5"/></g></svg>
<span style="position:absolute;left:275.0px;top:674.8px;font-size:9px;line-height:11px;color:#111;white-space:nowrap;letter-spacing:-0.26px;">Видео</span>
</div></div>
<div style="position:absolute;left:953px;top:607px;width:182px;height:29px;background:#8fa3e3;border:1px solid #7f94d8;"></div>
<div style="position:absolute;left:492px;top:666px;width:404px;height:15px;background:#8fa3e3;border-top:1px solid #c5cff0;"></div>
<div style="position:absolute;left:493px;top:667px;width:33px;height:14px;background:linear-gradient(90deg,#1a1a22,#3a3340 50%,#15151a);"></div>
<span style="position:absolute;left:530.0px;top:673.3px;font-size:9px;line-height:11px;color:#223;white-space:nowrap;letter-spacing:0.21px;">DJI_0011_2</span>
<div style="position:absolute;left:896px;top:666px;width:1px;height:15px;background:#5a6fc0;"></div>
<div style="position:absolute;left:897px;top:638px;width:23px;height:25px;background:#8fa3e3;border:1px solid #6f86d8;"></div>
<div style="position:absolute;left:899px;top:640px;width:19px;height:21px;background:linear-gradient(90deg,#7a1a2a 0,#b02838 35%,#c9b59a 55%,#3a2a5a 100%);"></div>
<svg style="position:absolute;left:942px;top:656px;" width="7" height="6" viewBox="0 0 7 6"><path d="M0.5 6 V3 L3.5 0.5 L6.5 3 V6Z" fill="#8a8a8a"/></svg>
<svg style="position:absolute;left:892px;top:656px;" width="7" height="6" viewBox="0 0 7 6"><path d="M0.5 6 V3 L3.5 0.5 L6.5 3 V6Z" fill="#8a8a8a"/></svg>
<svg style="position:absolute;left:950px;top:628px;" width="7" height="6" viewBox="0 0 7 6"><path d="M0.5 6 V3 L3.5 0.5 L6.5 3 V6Z" fill="#8a8a8a"/></svg>
<svg style="position:absolute;left:1020px;top:628px;" width="7" height="6" viewBox="0 0 7 6"><path d="M0.5 6 V3 L3.5 0.5 L6.5 3 V6Z" fill="#8a8a8a"/></svg>
<svg style="position:absolute;left:1033px;top:628px;" width="7" height="6" viewBox="0 0 7 6"><path d="M0.5 6 V3 L3.5 0.5 L6.5 3 V6Z" fill="#8a8a8a"/></svg>
<div style="position:absolute;left:957px;top:627px;width:32px;height:6px;background:#1d1d1d;"></div>
<div style="position:absolute;left:767px;top:578px;width:1px;height:103px;background:#c01818;"></div>
<span style="position:absolute;left:1093.0px;top:546.3px;font-size:9px;line-height:11px;color:#222;white-space:nowrap;letter-spacing:0.22px;">01:55.200</span>
<span style="position:absolute;left:1143.0px;top:546.3px;font-size:9px;line-height:11px;color:#222;white-space:nowrap;letter-spacing:-0.00px;">02:02.400</span>
<span style="position:absolute;left:1191.0px;top:546.3px;font-size:9px;line-height:11px;color:#222;white-space:nowrap;letter-spacing:-0.00px;">02:09.6</span>
<svg style="position:absolute;left:1092px;top:556px;" width="129" height="6" viewBox="0 0 129 6"><path d="M3.5 2.5 V6 M11.5 0 V6 M19.5 2.5 V6 M27.5 2.5 V6 M35.5 0 V6 M43.5 2.5 V6 M51.5 2.5 V6 M59.5 0 V6 M67.5 2.5 V6 M75.5 2.5 V6 M83.5 0 V6 M91.5 2.5 V6 M99.5 2.5 V6 M107.5 0 V6 M115.5 2.5 V6 M123.5 2.5 V6" stroke="#333" stroke-width="1"/></svg>
<div style="position:absolute;left:1141px;top:563px;width:58px;height:11px;background:#fff;"></div>
<span style="position:absolute;left:1142.0px;top:563.8px;font-size:9px;line-height:11px;color:#111;white-space:nowrap;letter-spacing:0.29px;">00:01:58.280</span>
<svg style="position:absolute;left:1130px;top:563px;" width="12" height="11" viewBox="0 0 12 11"><path d="M1 10.5 V5 L6 0.5 L11 5 V10.5Z" fill="#fff" stroke="#333"/></svg>
<div style="position:absolute;left:1215px;top:536px;width:6px;height:7px;background:#3a78d8;"></div>
<div style="position:absolute;left:1221px;top:535px;width:16px;height:146px;background:#f0f0f0;"></div>
<div style="position:absolute;left:1222px;top:565px;width:14px;height:56px;background:#cdcdcd;"></div>
<svg style="position:absolute;left:1224px;top:540px;" width="10" height="8" viewBox="0 0 10 8"><path d="M1.5 6 L5 2.5 L8.5 6" fill="none" stroke="#444" stroke-width="1.4"/></svg>
<svg style="position:absolute;left:1224px;top:671px;" width="10" height="8" viewBox="0 0 10 8"><path d="M1.5 2 L5 5.5 L8.5 2" fill="none" stroke="#444" stroke-width="1.4"/></svg>
<div style="position:absolute;left:189px;top:682px;width:1048px;height:16px;background:#f0f0f0;"></div>
<div style="position:absolute;left:203px;top:683px;width:1005px;height:14px;background:#d2d2d2;"></div>
<svg style="position:absolute;left:192px;top:685px;" width="10" height="10" viewBox="0 0 10 10"><path d="M6.5 1.5 L3 5 L6.5 8.5" fill="none" stroke="#444" stroke-width="1.4"/></svg>
<svg style="position:absolute;left:1212px;top:685px;" width="10" height="10" viewBox="0 0 10 10"><path d="M3.5 1.5 L7 5 L3.5 8.5" fill="none" stroke="#444" stroke-width="1.4"/></svg>
<div style="position:absolute;left:0px;top:700px;width:1405px;height:18px;background:linear-gradient(#f2f2f2,#e6e6e6);border-top:1px solid #cfcfcf;"></div>
<div style="position:absolute;left:802px;top:703px;width:1px;height:13px;background:#c5c5c5;"></div>
<span style="position:absolute;left:807.5px;top:704.0px;font-size:9.5px;line-height:11.5px;color:#333;white-space:nowrap;letter-spacing:0.03px;">Position</span>
<span style="position:absolute;left:850.0px;top:704.0px;font-size:9.5px;line-height:11.5px;color:#333;white-space:nowrap;letter-spacing:-0.41px;">00:01:03.040</span>
<span style="position:absolute;left:912.0px;top:704.0px;font-size:9.5px;line-height:11.5px;color:#333;white-space:nowrap;letter-spacing:-0.08px;">Start selection:</span>
<span style="position:absolute;left:980.5px;top:704.0px;font-size:9.5px;line-height:11.5px;color:#333;white-space:nowrap;letter-spacing:-0.33px;">00:00:00.000</span>
<span style="position:absolute;left:1043.5px;top:704.0px;font-size:9.5px;line-height:11.5px;color:#333;white-space:nowrap;letter-spacing:-0.04px;">End selection</span>
<span style="position:absolute;left:1107.0px;top:704.0px;font-size:9.5px;line-height:11.5px;color:#333;white-space:nowrap;letter-spacing:-0.33px;">00:00:00.000</span>
<div style="position:absolute;left:1174px;top:700px;width:66.5px;height:18px;overflow:hidden">
<span style="position:absolute;left:0.0px;top:4.0px;font-size:9.5px;line-height:11.5px;color:#333;white-space:nowrap;letter-spacing:0.18px;">Zoom To Screen</span>
</div>
<span style="position:absolute;left:1256.5px;top:704.0px;font-size:9.5px;line-height:11.5px;color:#333;white-space:nowrap;letter-spacing:-0.67px;">35%</span>
<svg style="position:absolute;left:1282px;top:703px;" width="12" height="12" viewBox="0 0 12 12"><circle cx="6" cy="6" r="5" fill="#fff" stroke="#777"/><path d="M3.5 6 H8.5" stroke="#444" stroke-width="1.2"/></svg>
<div style="position:absolute;left:1295px;top:709px;width:80px;height:1px;background:#a5a5a5;"></div>
<svg style="position:absolute;left:1305px;top:703px;" width="8" height="12" viewBox="0 0 8 12"><path d="M0.5 0.5 H6.5 V7 L3.5 10.5 L0.5 7Z" fill="#f4f4f4" stroke="#777"/></svg>
<div style="position:absolute;left:1335px;top:706px;width:1px;height:6px;background:#a5a5a5;"></div>
<svg style="position:absolute;left:1376px;top:703px;" width="12" height="12" viewBox="0 0 12 12"><circle cx="6" cy="6" r="5" fill="#fff" stroke="#777"/><path d="M3.5 6 H8.5 M6 3.5 V8.5" stroke="#444" stroke-width="1.2"/></svg>
<svg style="position:absolute;left:1398px;top:708px;" width="7" height="9" viewBox="0 0 7 9"><g fill="#bbb"><rect x="4" y="1" width="1.5" height="1.5"/><rect x="2" y="4" width="1.5" height="1.5"/><rect x="4" y="4" width="1.5" height="1.5"/><rect x="0" y="7" width="1.5" height="1.5"/><rect x="2" y="7" width="1.5" height="1.5"/><rect x="4" y="7" width="1.5" height="1.5"/></g></svg>
<div style="position:absolute;left:1240px;top:118px;width:165px;height:21px;background:#d5dae6;"></div>
<span style="position:absolute;left:1245.0px;top:123.3px;font-size:10px;line-height:12px;color:#3a3f4a;white-space:nowrap;letter-spacing:-0.18px;">Resources window</span>
<svg style="position:absolute;left:1377px;top:122px;" width="26" height="12" viewBox="0 0 26 12"><path d="M3.5 2 V7 M6.5 2 V7 M3.5 2 H6.5 M2 7 H8 M5 7 V11" stroke="#333" stroke-width="1" fill="none"/><path d="M15 3 L21 9 M21 3 L15 9" stroke="#333" stroke-width="1.2"/></svg>
<div style="position:absolute;left:1240px;top:139px;width:165px;height:543px;background:#fff;"></div>
<div style="position:absolute;left:1275px;top:140px;width:47px;height:12px;background:#f0f0f0;"></div>
<div style="position:absolute;left:1250px;top:146px;width:1px;height:88px;border-left:1px dotted #a8a8a8;"></div>
<div style="position:absolute;left:1250px;top:146px;width:9px;height:1px;border-top:1px dotted #a8a8a8;"></div>
<div style="position:absolute;left:1266px;top:165px;width:1px;height:7px;border-left:1px dotted #a8a8a8;"></div>
<div style="position:absolute;left:1266px;top:172px;width:8px;height:1px;border-top:1px dotted #a8a8a8;"></div>
<div style="position:absolute;left:1266px;top:191px;width:1px;height:34px;border-left:1px dotted #a8a8a8;"></div>
<div style="position:absolute;left:1266px;top:199px;width:8px;height:1px;border-top:1px dotted #a8a8a8;"></div>
<div style="position:absolute;left:1266px;top:212px;width:8px;height:1px;border-top:1px dotted #a8a8a8;"></div>
<div style="position:absolute;left:1266px;top:225px;width:8px;height:1px;border-top:1px dotted #a8a8a8;"></div>
<div style="position:absolute;left:1266px;top:244px;width:1px;height:139px;border-left:1px dotted #a8a8a8;"></div>
<div style="position:absolute;left:1266px;top:251px;width:8px;height:1px;border-top:1px dotted #a8a8a8;"></div>
<div style="position:absolute;left:1266px;top:265px;width:8px;height:1px;border-top:1px dotted #a8a8a8;"></div>
<div style="position:absolute;left:1266px;top:278px;width:8px;height:1px;border-top:1px dotted #a8a8a8;"></div>
<div style="position:absolute;left:1266px;top:291px;width:8px;height:1px;border-top:1px dotted #a8a8a8;"></div>
<div style="position:absolute;left:1266px;top:304px;width:8px;height:1px;border-top:1px dotted #a8a8a8;"></div>
<div style="position:absolute;left:1266px;top:317px;width:8px;height:1px;border-top:1px dotted #a8a8a8;"></div>
<div style="position:absolute;left:1266px;top:331px;width:8px;height:1px;border-top:1px dotted #a8a8a8;"></div>
<div style="position:absolute;left:1266px;top:344px;width:8px;height:1px;border-top:1px dotted #a8a8a8;"></div>
<div style="position:absolute;left:1266px;top:357px;width:8px;height:1px;border-top:1px dotted #a8a8a8;"></div>
<div style="position:absolute;left:1266px;top:370px;width:8px;height:1px;border-top:1px dotted #a8a8a8;"></div>
<div style="position:absolute;left:1266px;top:383px;width:8px;height:1px;border-top:1px dotted #a8a8a8;"></div>
<svg style="position:absolute;left:1259.5px;top:140.0px" width="12" height="12" viewBox="0 0 12 12"><circle cx="6" cy="2.2" r="1.9" fill="#c9a227"/><path d="M6 4 L3 7.5 L5 8 L2.5 11.5 H5 L6 9 L7 11.5 H9.5 L7 8 L9 7.5Z" fill="#b8860b"/></svg>
<span style="position:absolute;left:1277.0px;top:141.3px;font-size:9px;line-height:11px;color:#111;white-space:nowrap;letter-spacing:0.15px;">Animations</span>
<div style="position:absolute;left:1254px;top:159px;width:5px;height:1px;border-top:1px dotted #a8a8a8;"></div>
<svg style="position:absolute;left:1246.0px;top:155.2px" width="9" height="9"><rect x="0.5" y="0.5" width="8" height="8" fill="#fff" stroke="#9b9b9b"/><path d="M2.5 4.5 H6.5" stroke="#444"/></svg>
<svg style="position:absolute;left:1259.5px;top:153.2px" width="12" height="12" viewBox="0 0 12 12"><rect x="0.5" y="1.5" width="11" height="8" fill="#dfe9f7" stroke="#b8c8e0" stroke-width=".6"/><rect x="1" y="2" width="5" height="2.4" fill="#3a6fd0"/><rect x="6" y="4.5" width="5" height="2" fill="#5a8ee0"/><path d="M1 9 L4.5 6 L7 8 L9 6.5 L11 9Z" fill="#d8a06a"/></svg>
<span style="position:absolute;left:1277.0px;top:154.5px;font-size:9px;line-height:11px;color:#111;white-space:nowrap;letter-spacing:0.15px;">Images</span>
<svg style="position:absolute;left:1274.5px;top:165.9px" width="13" height="13" viewBox="0 0 12 12"><rect x="0.5" y="0.5" width="11" height="11" fill="#0d2b45" stroke="#2fa3e0" stroke-width=".9"/><text x="2" y="9" font-size="7" fill="#52c3f5" font-family="Liberation Sans,sans-serif">Ps</text></svg>
<span style="position:absolute;left:1292.0px;top:167.7px;font-size:9px;line-height:11px;color:#111;white-space:nowrap;letter-spacing:0.12px;">logo-01.png; ID=13</span>
<div style="position:absolute;left:1254px;top:186px;width:5px;height:1px;border-top:1px dotted #a8a8a8;"></div>
<svg style="position:absolute;left:1246.0px;top:181.5px" width="9" height="9"><rect x="0.5" y="0.5" width="8" height="8" fill="#fff" stroke="#9b9b9b"/><path d="M2.5 4.5 H6.5" stroke="#444"/></svg>
<svg style="position:absolute;left:1259.5px;top:179.5px" width="12" height="12" viewBox="0 0 12 12"><path d="M4 2 H10.5 V9" fill="none" stroke="#222" stroke-width="1.3"/><path d="M4 2 V10" stroke="#222" stroke-width="1.3"/><ellipse cx="2.8" cy="10" rx="1.9" ry="1.4" fill="#222"/><ellipse cx="9.3" cy="9" rx="1.9" ry="1.4" fill="#222"/></svg>
<span style="position:absolute;left:1277.0px;top:180.8px;font-size:9px;line-height:11px;color:#111;white-space:nowrap;letter-spacing:0.15px;">Sounds</span>
<svg style="position:absolute;left:1274.5px;top:192.2px" width="13" height="13" viewBox="0 0 12 12"><path d="M1.5 0.5 H8 L10.5 3 V11.5 H1.5Z" fill="#e9e9e9" stroke="#444" stroke-width=".9"/><rect x="3" y="4.5" width="6" height="3.5" fill="#555"/><path d="M3 9.5 H9" stroke="#777" stroke-width=".8"/><path d="M3 2.5 H7" stroke="#777" stroke-width=".8"/></svg>
<span style="position:absolute;left:1292.0px;top:194.0px;font-size:9px;line-height:11px;color:#111;white-space:nowrap;letter-spacing:0.12px;">00000.MTS; ID=11</span>
<svg style="position:absolute;left:1274.5px;top:205.4px" width="13" height="13" viewBox="0 0 12 12"><rect x="1" y="0.5" width="10" height="11" fill="#f2f6fb" stroke="#9fb4cc" stroke-width=".8"/><circle cx="6" cy="6" r="3.2" fill="none" stroke="#2a6fc9" stroke-width="1.3"/><circle cx="6" cy="6" r="1" fill="#2a6fc9"/></svg>
<span style="position:absolute;left:1292.0px;top:207.2px;font-size:9px;line-height:11px;color:#111;white-space:nowrap;letter-spacing:-0.03px;">Lorn-Acid_Rain.mp3; ID=12</span>
<svg style="position:absolute;left:1274.5px;top:218.6px" width="13" height="13" viewBox="0 0 12 12"><path d="M1.5 0.5 H8 L10.5 3 V11.5 H1.5Z" fill="#e9e9e9" stroke="#444" stroke-width=".9"/><rect x="3" y="4.5" width="6" height="3.5" fill="#555"/><path d="M3 9.5 H9" stroke="#777" stroke-width=".8"/><path d="M3 2.5 H7" stroke="#777" stroke-width=".8"/></svg>
<span style="position:absolute;left:1292.0px;top:220.4px;font-size:9px;line-height:11px;color:#111;white-space:nowrap;letter-spacing:0.12px;">00003.MTS; ID=15</span>
<div style="position:absolute;left:1254px;top:238px;width:5px;height:1px;border-top:1px dotted #a8a8a8;"></div>
<svg style="position:absolute;left:1246.0px;top:234.3px" width="9" height="9"><rect x="0.5" y="0.5" width="8" height="8" fill="#fff" stroke="#9b9b9b"/><path d="M2.5 4.5 H6.5" stroke="#444"/></svg>
<svg style="position:absolute;left:1259.5px;top:232.3px" width="12" height="12" viewBox="0 0 12 12"><circle cx="4.5" cy="4.5" r="4" fill="#8c8c8c"/><circle cx="4.5" cy="4.5" r="1.2" fill="#eee"/><circle cx="2.7" cy="3" r=".8" fill="#eee"/><circle cx="6.3" cy="3" r=".8" fill="#eee"/><circle cx="4.5" cy="6.6" r=".8" fill="#eee"/><path d="M5 6 L11.5 9 L9 12 L4 9Z" fill="#c9a063"/><path d="M7.5 8.5 L11.5 11.5" stroke="#b5483a" stroke-width="1.5"/></svg>
<span style="position:absolute;left:1277.0px;top:233.6px;font-size:9px;line-height:11px;color:#111;white-space:nowrap;letter-spacing:0.15px;">Videos</span>
<svg style="position:absolute;left:1274.5px;top:244.9px" width="13" height="13" viewBox="0 0 12 12"><path d="M1.5 0.5 H8 L10.5 3 V11.5 H1.5Z" fill="#e9e9e9" stroke="#444" stroke-width=".9"/><rect x="3" y="4.5" width="6" height="3.5" fill="#555"/><path d="M3 9.5 H9" stroke="#777" stroke-width=".8"/><path d="M3 2.5 H7" stroke="#777" stroke-width=".8"/></svg>
<span style="position:absolute;left:1292.0px;top:246.7px;font-size:9px;line-height:11px;color:#111;white-space:nowrap;letter-spacing:0.12px;">00009.MTS; ID=1</span>
<svg style="position:absolute;left:1274.5px;top:258.1px" width="13" height="13" viewBox="0 0 12 12"><path d="M1.5 0.5 H8 L10.5 3 V11.5 H1.5Z" fill="#e9e9e9" stroke="#444" stroke-width=".9"/><rect x="3" y="4.5" width="6" height="3.5" fill="#555"/><path d="M3 9.5 H9" stroke="#777" stroke-width=".8"/><path d="M3 2.5 H7" stroke="#777" stroke-width=".8"/></svg>
<span style="position:absolute;left:1292.0px;top:259.9px;font-size:9px;line-height:11px;color:#111;white-space:nowrap;letter-spacing:0.12px;">00008.MTS; ID=2</span>
<svg style="position:absolute;left:1274.5px;top:271.3px" width="13" height="13" viewBox="0 0 12 12"><path d="M1.5 0.5 H8 L10.5 3 V11.5 H1.5Z" fill="#e9e9e9" stroke="#444" stroke-width=".9"/><rect x="3" y="4.5" width="6" height="3.5" fill="#555"/><path d="M3 9.5 H9" stroke="#777" stroke-width=".8"/><path d="M3 2.5 H7" stroke="#777" stroke-width=".8"/></svg>
<span style="position:absolute;left:1292.0px;top:273.1px;font-size:9px;line-height:11px;color:#111;white-space:nowrap;letter-spacing:0.12px;">00007.MTS; ID=3</span>
<svg style="position:absolute;left:1274.5px;top:284.5px" width="13" height="13" viewBox="0 0 12 12"><path d="M1.5 0.5 H8 L10.5 3 V11.5 H1.5Z" fill="#e9e9e9" stroke="#444" stroke-width=".9"/><rect x="3" y="4.5" width="6" height="3.5" fill="#555"/><path d="M3 9.5 H9" stroke="#777" stroke-width=".8"/><path d="M3 2.5 H7" stroke="#777" stroke-width=".8"/></svg>
<span style="position:absolute;left:1292.0px;top:286.3px;font-size:9px;line-height:11px;color:#111;white-space:nowrap;letter-spacing:0.12px;">00006.MTS; ID=4</span>
<svg style="position:absolute;left:1274.5px;top:297.7px" width="13" height="13" viewBox="0 0 12 12"><path d="M1.5 0.5 H8 L10.5 3 V11.5 H1.5Z" fill="#e9e9e9" stroke="#444" stroke-width=".9"/><rect x="3" y="4.5" width="6" height="3.5" fill="#555"/><path d="M3 9.5 H9" stroke="#777" stroke-width=".8"/><path d="M3 2.5 H7" stroke="#777" stroke-width=".8"/></svg>
<span style="position:absolute;left:1292.0px;top:299.5px;font-size:9px;line-height:11px;color:#111;white-space:nowrap;letter-spacing:0.12px;">00005.MTS; ID=5</span>
<svg style="position:absolute;left:1274.5px;top:310.8px" width="13" height="13" viewBox="0 0 12 12"><path d="M1.5 0.5 H8 L10.5 3 V11.5 H1.5Z" fill="#e9e9e9" stroke="#444" stroke-width=".9"/><rect x="3" y="4.5" width="6" height="3.5" fill="#555"/><path d="M3 9.5 H9" stroke="#777" stroke-width=".8"/><path d="M3 2.5 H7" stroke="#777" stroke-width=".8"/></svg>
<span style="position:absolute;left:1292.0px;top:312.6px;font-size:9px;line-height:11px;color:#111;white-space:nowrap;letter-spacing:0.12px;">00004.MTS; ID=6</span>
<svg style="position:absolute;left:1274.5px;top:324.0px" width="13" height="13" viewBox="0 0 12 12"><path d="M1.5 0.5 H8 L10.5 3 V11.5 H1.5Z" fill="#e9e9e9" stroke="#444" stroke-width=".9"/><rect x="3" y="4.5" width="6" height="3.5" fill="#555"/><path d="M3 9.5 H9" stroke="#777" stroke-width=".8"/><path d="M3 2.5 H7" stroke="#777" stroke-width=".8"/></svg>
<span style="position:absolute;left:1292.0px;top:325.8px;font-size:9px;line-height:11px;color:#111;white-space:nowrap;letter-spacing:0.12px;">00003.MTS; ID=7</span>
<svg style="position:absolute;left:1274.5px;top:337.2px" width="13" height="13" viewBox="0 0 12 12"><path d="M1.5 0.5 H8 L10.5 3 V11.5 H1.5Z" fill="#e9e9e9" stroke="#444" stroke-width=".9"/><rect x="3" y="4.5" width="6" height="3.5" fill="#555"/><path d="M3 9.5 H9" stroke="#777" stroke-width=".8"/><path d="M3 2.5 H7" stroke="#777" stroke-width=".8"/></svg>
<span style="position:absolute;left:1292.0px;top:339.0px;font-size:9px;line-height:11px;color:#111;white-space:nowrap;letter-spacing:0.12px;">00002.MTS; ID=8</span>
<svg style="position:absolute;left:1274.5px;top:350.4px" width="13" height="13" viewBox="0 0 12 12"><path d="M1.5 0.5 H8 L10.5 3 V11.5 H1.5Z" fill="#e9e9e9" stroke="#444" stroke-width=".9"/><rect x="3" y="4.5" width="6" height="3.5" fill="#555"/><path d="M3 9.5 H9" stroke="#777" stroke-width=".8"/><path d="M3 2.5 H7" stroke="#777" stroke-width=".8"/></svg>
<span style="position:absolute;left:1292.0px;top:352.2px;font-size:9px;line-height:11px;color:#111;white-space:nowrap;letter-spacing:0.12px;">00001.MTS; ID=9</span>
<svg style="position:absolute;left:1274.5px;top:363.6px" width="13" height="13" viewBox="0 0 12 12"><path d="M1.5 0.5 H8 L10.5 3 V11.5 H1.5Z" fill="#e9e9e9" stroke="#444" stroke-width=".9"/><rect x="3" y="4.5" width="6" height="3.5" fill="#555"/><path d="M3 9.5 H9" stroke="#777" stroke-width=".8"/><path d="M3 2.5 H7" stroke="#777" stroke-width=".8"/></svg>
<span style="position:absolute;left:1292.0px;top:365.4px;font-size:9px;line-height:11px;color:#111;white-space:nowrap;letter-spacing:0.12px;">00000.MTS; ID=10</span>
<svg style="position:absolute;left:1274.5px;top:376.7px" width="13" height="13" viewBox="0 0 12 12"><path d="M1.5 0.5 H8 L10.5 3 V11.5 H1.5Z" fill="#e9e9e9" stroke="#444" stroke-width=".9"/><rect x="3" y="4.5" width="6" height="3.5" fill="#555"/><path d="M3 9.5 H9" stroke="#777" stroke-width=".8"/><path d="M3 2.5 H7" stroke="#777" stroke-width=".8"/></svg>
<span style="position:absolute;left:1292.0px;top:378.5px;font-size:9px;line-height:11px;color:#111;white-space:nowrap;letter-spacing:0.12px;">DJI_0011.MP4; ID=14</span>
<div style="position:absolute;left:1243px;top:682px;width:81px;height:18px;background:#dbe3f0;border:1px solid #c5cede;border-top:none;"></div>
<div style="position:absolute;left:1325px;top:682px;width:79px;height:18px;background:#fbfcfe;border:1px solid #c5cede;border-top:none;"></div>
<svg style="position:absolute;left:1249px;top:685px;" width="13" height="12" viewBox="0 0 13 12"><rect x="0.5" y="0.5" width="12" height="11" fill="#fff" stroke="#4a6fa5"/><rect x="0.5" y="0.5" width="12" height="2.5" fill="#4a6fa5"/><path d="M2 5 H11 M2 7 H11 M2 9 H11" stroke="#7a96c0" stroke-width=".8"/></svg>
<span style="position:absolute;left:1265.5px;top:685.8px;font-size:10px;line-height:12px;color:#333;white-space:nowrap;letter-spacing:-0.34px;">Properties ...</span>
<svg style="position:absolute;left:1330px;top:685px;" width="13" height="12" viewBox="0 0 13 12"><rect x="0.5" y="0.5" width="12" height="11" fill="#fff" stroke="#4a6fa5"/><rect x="0.5" y="0.5" width="12" height="2.5" fill="#4a6fa5"/><rect x="2" y="5" width="4" height="2.5" fill="#3fae5a"/><rect x="7" y="5" width="4" height="2.5" fill="#e0a030"/><rect x="2" y="8.5" width="9" height="2" fill="#7a96c0"/></svg>
<span style="position:absolute;left:1346.5px;top:685.8px;font-size:10px;line-height:12px;color:#333;white-space:nowrap;letter-spacing:-0.46px;">Resources ...</span>
<div style="position:absolute;left:313px;top:91px;width:780px;height:537px;background:#f0f0f0;border:1px solid #58b4b8;box-shadow:0 0 7px rgba(0,0,0,.22);"></div>
<div style="position:absolute;left:314px;top:92px;width:778px;height:24px;background:#fff;"></div>
<svg style="position:absolute;left:320px;top:97px;" width="13" height="13" viewBox="0 0 13 13"><rect width="13" height="13" fill="#127a78"/><path d="M2.5 2 V11 L8.5 6.5Z" fill="#5fd8c8"/><rect x="8.8" y="2" width="2.2" height="9" fill="#0b4f4d"/><path d="M8.5 4 L11 6.5 L8.5 9Z" fill="#3fb0a8"/></svg>
<span style="position:absolute;left:337.0px;top:97.8px;font-size:10px;line-height:12px;color:#111;white-space:nowrap;letter-spacing:-0.27px;">File's sequence wizard</span>
<svg style="position:absolute;left:994px;top:97px;" width="90" height="12" viewBox="0 0 90 12"><path d="M0 6.5 H9" stroke="#bbb"/><rect x="37.5" y="1.5" width="8" height="8" fill="none" stroke="#222" stroke-width="1.1"/><path d="M75 1.5 L83 9.5 M83 1.5 L75 9.5" stroke="#222" stroke-width="1.2"/></svg>
<div style="position:absolute;left:314px;top:116px;width:121px;height:281px;background:#fff;border:1px solid #8a8f98;"></div>
<div style="position:absolute;left:332px;top:118px;width:60px;height:13px;background:#ececec;"></div>
<svg style="position:absolute;left:318.5px;top:118.8px" width="11" height="11" viewBox="0 0 12 12"><rect x="0.5" y="1" width="11" height="10.5" rx="2" fill="url(#fxg)"/><path d="M4 2 V11 M8 2 V11" stroke="#f7d7e6" stroke-width="1.3" opacity=".85"/></svg>
<span style="position:absolute;left:334.0px;top:119.3px;font-size:9.5px;line-height:11.5px;color:#000;white-space:nowrap;font-weight:bold;letter-spacing:0.24px;">Perspective</span>
<svg style="position:absolute;left:318.5px;top:131.9px" width="11" height="11" viewBox="0 0 12 12"><rect x="0.5" y="1" width="11" height="10.5" rx="2" fill="url(#fxg)"/><path d="M4 2 V11 M8 2 V11" stroke="#f7d7e6" stroke-width="1.3" opacity=".85"/></svg>
<span style="position:absolute;left:334.0px;top:132.8px;font-size:9px;line-height:11px;color:#111;white-space:nowrap;">Skew</span>
<svg style="position:absolute;left:318.5px;top:145.1px" width="11" height="11" viewBox="0 0 12 12"><rect x="0.5" y="1" width="11" height="10.5" rx="2" fill="url(#fxg)"/><path d="M4 2 V11 M8 2 V11" stroke="#f7d7e6" stroke-width="1.3" opacity=".85"/></svg>
<span style="position:absolute;left:334.0px;top:145.9px;font-size:9px;line-height:11px;color:#111;white-space:nowrap;">Wipe Clock</span>
<svg style="position:absolute;left:318.5px;top:158.2px" width="11" height="11" viewBox="0 0 12 12"><rect x="0.5" y="1" width="11" height="10.5" rx="2" fill="url(#fxg)"/><path d="M4 2 V11 M8 2 V11" stroke="#f7d7e6" stroke-width="1.3" opacity=".85"/></svg>
<span style="position:absolute;left:334.0px;top:159.1px;font-size:9px;line-height:11px;color:#111;white-space:nowrap;">Wipe Door</span>
<svg style="position:absolute;left:318.5px;top:171.4px" width="11" height="11" viewBox="0 0 12 12"><rect x="0.5" y="1" width="11" height="10.5" rx="2" fill="url(#fxg)"/><path d="M4 2 V11 M8 2 V11" stroke="#f7d7e6" stroke-width="1.3" opacity=".85"/></svg>
<span style="position:absolute;left:334.0px;top:172.2px;font-size:9px;line-height:11px;color:#111;white-space:nowrap;">Wipe Side</span>
<svg style="position:absolute;left:318.5px;top:184.6px" width="11" height="11" viewBox="0 0 12 12"><rect x="0.5" y="1" width="11" height="10.5" rx="2" fill="url(#fxg)"/><path d="M4 2 V11 M8 2 V11" stroke="#f7d7e6" stroke-width="1.3" opacity=".85"/></svg>
<span style="position:absolute;left:334.0px;top:185.4px;font-size:9px;line-height:11px;color:#111;white-space:nowrap;">Wipe Center</span>
<svg style="position:absolute;left:318.5px;top:197.7px" width="11" height="11" viewBox="0 0 12 12"><rect x="0.5" y="1" width="11" height="10.5" rx="2" fill="url(#fxg)"/><path d="M4 2 V11 M8 2 V11" stroke="#f7d7e6" stroke-width="1.3" opacity=".85"/></svg>
<span style="position:absolute;left:334.0px;top:198.5px;font-size:9px;line-height:11px;color:#111;white-space:nowrap;">Wipe Strips</span>
<svg style="position:absolute;left:318.5px;top:210.8px" width="11" height="11" viewBox="0 0 12 12"><rect x="0.5" y="1" width="11" height="10.5" rx="2" fill="url(#fxg)"/><path d="M4 2 V11 M8 2 V11" stroke="#f7d7e6" stroke-width="1.3" opacity=".85"/></svg>
<span style="position:absolute;left:334.0px;top:211.7px;font-size:9px;line-height:11px;color:#111;white-space:nowrap;">Wipe Checker</span>
<svg style="position:absolute;left:318.5px;top:224.0px" width="11" height="11" viewBox="0 0 12 12"><rect x="0.5" y="1" width="11" height="10.5" rx="2" fill="url(#fxg)"/><path d="M4 2 V11 M8 2 V11" stroke="#f7d7e6" stroke-width="1.3" opacity=".85"/></svg>
<span style="position:absolute;left:334.0px;top:224.8px;font-size:9px;line-height:11px;color:#111;white-space:nowrap;">Push Door</span>
<svg style="position:absolute;left:318.5px;top:237.2px" width="11" height="11" viewBox="0 0 12 12"><rect x="0.5" y="1" width="11" height="10.5" rx="2" fill="url(#fxg)"/><path d="M4 2 V11 M8 2 V11" stroke="#f7d7e6" stroke-width="1.3" opacity=".85"/></svg>
<span style="position:absolute;left:334.0px;top:238.0px;font-size:9px;line-height:11px;color:#111;white-space:nowrap;">Push Side</span>
<svg style="position:absolute;left:318.5px;top:250.3px" width="11" height="11" viewBox="0 0 12 12"><rect x="0.5" y="1" width="11" height="10.5" rx="2" fill="url(#fxg)"/><path d="M4 2 V11 M8 2 V11" stroke="#f7d7e6" stroke-width="1.3" opacity=".85"/></svg>
<span style="position:absolute;left:334.0px;top:251.1px;font-size:9px;line-height:11px;color:#111;white-space:nowrap;">Push Strips</span>
<svg style="position:absolute;left:318.5px;top:263.4px" width="11" height="11" viewBox="0 0 12 12"><rect x="0.5" y="1" width="11" height="10.5" rx="2" fill="url(#fxg)"/><path d="M4 2 V11 M8 2 V11" stroke="#f7d7e6" stroke-width="1.3" opacity=".85"/></svg>
<span style="position:absolute;left:334.0px;top:264.2px;font-size:9px;line-height:11px;color:#111;white-space:nowrap;">Fade</span>
<svg style="position:absolute;left:318.5px;top:276.6px" width="11" height="11" viewBox="0 0 12 12"><rect x="0.5" y="1" width="11" height="10.5" rx="2" fill="url(#fxg)"/><path d="M4 2 V11 M8 2 V11" stroke="#f7d7e6" stroke-width="1.3" opacity=".85"/></svg>
<span style="position:absolute;left:334.0px;top:277.4px;font-size:9px;line-height:11px;color:#111;white-space:nowrap;">Mosaic</span>
<svg style="position:absolute;left:318.5px;top:289.8px" width="11" height="11" viewBox="0 0 12 12"><rect x="0.5" y="1" width="11" height="10.5" rx="2" fill="url(#fxg)"/><path d="M4 2 V11 M8 2 V11" stroke="#f7d7e6" stroke-width="1.3" opacity=".85"/></svg>
<span style="position:absolute;left:334.0px;top:290.6px;font-size:9px;line-height:11px;color:#111;white-space:nowrap;">Diffuse</span>
<svg style="position:absolute;left:318.5px;top:302.9px" width="11" height="11" viewBox="0 0 12 12"><rect x="0.5" y="1" width="11" height="10.5" rx="2" fill="url(#fxg)"/><path d="M4 2 V11 M8 2 V11" stroke="#f7d7e6" stroke-width="1.3" opacity=".85"/></svg>
<span style="position:absolute;left:334.0px;top:303.7px;font-size:9px;line-height:11px;color:#111;white-space:nowrap;">Page Turn</span>
<div style="position:absolute;left:439px;top:116px;width:378px;height:281px;background:#fff;border:1px solid #8a8f98;"></div>
<div style="position:absolute;left:801px;top:117px;width:15px;height:279px;background:#f0f0f0;"></div>
<div style="position:absolute;left:802px;top:132px;width:13px;height:61px;background:#cdcdcd;"></div>
<svg style="position:absolute;left:803px;top:121px;" width="11" height="8" viewBox="0 0 11 8"><path d="M1.5 6.5 L5.5 2.5 L9.5 6.5" fill="none" stroke="#444" stroke-width="1.5"/></svg>
<svg style="position:absolute;left:803px;top:384px;" width="11" height="8" viewBox="0 0 11 8"><path d="M1.5 1.5 L5.5 5.5 L9.5 1.5" fill="none" stroke="#444" stroke-width="1.5"/></svg>
<svg width="0" height="0" style="position:absolute"><defs><filter id="treesc" x="0" y="0" width="100%" height="100%"><feTurbulence type="fractalNoise" baseFrequency="0.22 0.025" numOctaves="3" seed="11" result="n"/><feColorMatrix in="n" type="matrix" values="2.4 0 0 0 -1.0  3.0 0 0 0 -1.0  2.6 0 0 0 -1.0  0 0 0 0 1" result="g"/><feComposite in="g" in2="SourceGraphic" operator="in"/></filter><filter id="trees" x="0" y="0" width="100%" height="100%"><feTurbulence type="fractalNoise" baseFrequency="0.22 0.025" numOctaves="3" seed="7" result="n"/><feColorMatrix in="n" type="matrix" values="2.0 0 0 0 -0.58  2.0 0 0 0 -0.58  2.0 0 0 0 -0.58  0 0 0 0 1" result="g"/><feComposite in="g" in2="SourceGraphic" operator="in"/></filter><pattern id="forest" width="40" height="60" patternUnits="userSpaceOnUse"><rect width="40" height="60" fill="#6e6e6e"/><rect x="0" width="3" height="60" fill="#2a2a2a"/><rect x="3" width="2" height="60" fill="#9a9a9a"/><rect x="5" width="2.5" height="60" fill="#444"/><rect x="9" width="1.5" height="60" fill="#cfcfcf"/><rect x="10.5" width="4.5" height="60" fill="#1e1e1e"/><rect x="15" width="2" height="60" fill="#8a8a8a"/><rect x="17" width="2" height="60" fill="#d8d8d8"/><rect x="19" width="2" height="60" fill="#555"/><rect x="21" width="1.5" height="60" fill="#bdbdbd"/><rect x="22.5" width="2" height="60" fill="#3a3a3a"/><rect x="26" width="1.5" height="60" fill="#c8c8c8"/><rect x="27.5" width="5" height="60" fill="#222"/><rect x="32.5" width="2" height="60" fill="#7a7a7a"/><rect x="35" width="1.5" height="60" fill="#b0b0b0"/><rect x="36.5" width="2.5" height="60" fill="#3f3f3f"/></pattern><linearGradient id="fshade" x1="0" y1="0" x2="0" y2="1"><stop offset="0" stop-color="#000" stop-opacity=".45"/><stop offset=".5" stop-color="#000" stop-opacity=".05"/><stop offset=".85" stop-color="#000" stop-opacity=".35"/><stop offset="1" stop-color="#000" stop-opacity=".8"/></linearGradient><linearGradient id="lake" x1="0" y1="0" x2="0" y2="1"><stop offset="0" stop-color="#a8a8a8"/><stop offset=".25" stop-color="#9a9a9a"/><stop offset=".5" stop-color="#5f5f5f"/><stop offset=".72" stop-color="#6a6a6a"/><stop offset="1" stop-color="#8f8f8f"/></linearGradient></defs></svg>
<div style="position:absolute;left:692px;top:304px;width:86px;height:61px;border:1px solid #e6e6e6;background:#fff;"></div>
<svg style="position:absolute;left:458px;top:120px;overflow:hidden" width="81" height="56" viewBox="0 0 81 56"><g filter="url(#soft2)"><rect width="81" height="56" fill="url(#lake)"/><path d="M0 6 L8 3 L20 12 L30 18 V30 H0Z" fill="#5a5a5a"/><path d="M0 10 L6 8 L14 16 L4 22 L0 20Z" fill="#8a8a8a"/><path d="M58 26 L70 20 L81 24 V32 H58Z" fill="#555"/><path d="M0 36 Q14 34 26 42 Q14 50 0 52Z" fill="#3f3f3f"/><polygon points="7.6,13.5 72.6,13.5 81,42 0,42" fill="#777" filter="url(#trees)"/><path d="M32.3 13.5 L26.7 42.0" stroke="#161616" stroke-width="2.6" opacity=".7"/><path d="M47.9 13.5 L56.7 42.0" stroke="#161616" stroke-width="2.8" opacity=".7"/><polygon points="7.6,13.5 72.6,13.5 81,42 0,42" fill="url(#fshade)"/><polygon points="0,41 81,41 81,43 0,43" fill="#151515"/></g></svg>
<span style="position:absolute;left:478.0px;top:181.3px;font-size:9px;line-height:11px;color:#111;white-space:nowrap;letter-spacing:0.05px;">Horizontal</span>
<svg style="position:absolute;left:575.5px;top:120px;overflow:hidden" width="81" height="56" viewBox="0 0 81 56"><g filter="url(#soft2)"><polygon points="9.5,13.5 72.5,13.5 81,42 0,42" fill="#777" filter="url(#trees)"/><path d="M33.4 13.5 L26.7 42.0" stroke="#161616" stroke-width="2.6" opacity=".7"/><path d="M48.6 13.5 L56.7 42.0" stroke="#161616" stroke-width="2.8" opacity=".7"/><polygon points="9.5,13.5 72.5,13.5 81,42 0,42" fill="url(#fshade)"/><polygon points="0,41 81,41 81,43.5 0,43.5" fill="#151515"/></g></svg>
<span style="position:absolute;left:591.5px;top:181.3px;font-size:9px;line-height:11px;color:#111;white-space:nowrap;letter-spacing:0.08px;">Horizontal 2</span>
<svg style="position:absolute;left:693.5px;top:120px;overflow:hidden" width="81" height="56" viewBox="0 0 81 56"><g filter="url(#soft2)"><clipPath id="cp54682"><polygon points="0.5,10 81,10 75.5,46 6,46"/></clipPath><g clip-path="url(#cp54682)"><rect width="81" height="56" fill="url(#lake)"/><path d="M0 6 L8 3 L20 12 L30 18 V30 H0Z" fill="#5a5a5a"/><path d="M0 10 L6 8 L14 16 L4 22 L0 20Z" fill="#8a8a8a"/><path d="M58 26 L70 20 L81 24 V32 H58Z" fill="#555"/><path d="M0 36 Q14 34 26 42 Q14 50 0 52Z" fill="#3f3f3f"/></g><polygon points="13,17 69,17 81,38 0.5,38" fill="#777" filter="url(#trees)"/><path d="M34.3 17.0 L27.1 38.0" stroke="#161616" stroke-width="2.6" opacity=".7"/><path d="M47.7 17.0 L56.8 38.0" stroke="#161616" stroke-width="2.8" opacity=".7"/><polygon points="13,17 69,17 81,38 0.5,38" fill="url(#fshade)"/><polygon points="0.5,37.5 81,37.5 81,39.5 0.5,39.5" fill="#151515"/></g></svg>
<span style="position:absolute;left:709.5px;top:181.3px;font-size:9px;line-height:11px;color:#111;white-space:nowrap;letter-spacing:0.08px;">Horizontal 3</span>
<svg style="position:absolute;left:458px;top:214px;overflow:hidden" width="81" height="56" viewBox="0 0 81 56"><g filter="url(#soft2)"><rect width="81" height="56" fill="url(#lake)"/><path d="M0 6 L8 3 L20 12 L30 18 V30 H0Z" fill="#5a5a5a"/><path d="M0 10 L6 8 L14 16 L4 22 L0 20Z" fill="#8a8a8a"/><path d="M58 26 L70 20 L81 24 V32 H58Z" fill="#555"/><path d="M0 36 Q14 34 26 42 Q14 50 0 52Z" fill="#3f3f3f"/><polygon points="0,13.5 81,13.5 73,42 5.7,42" fill="#777" filter="url(#trees)"/><path d="M30.8 13.5 L27.9 42.0" stroke="#161616" stroke-width="2.6" opacity=".7"/><path d="M50.2 13.5 L52.8 42.0" stroke="#161616" stroke-width="2.8" opacity=".7"/><polygon points="0,13.5 81,13.5 73,42 5.7,42" fill="url(#fshade)"/></g></svg>
<span style="position:absolute;left:461.0px;top:275.3px;font-size:9px;line-height:11px;color:#111;white-space:nowrap;letter-spacing:0.11px;">Rotated horizontal</span>
<svg style="position:absolute;left:575.5px;top:214px;overflow:hidden" width="81" height="56" viewBox="0 0 81 56"><g filter="url(#soft2)"><polygon points="1,13.5 82,13.5 73,42 10,42" fill="#777" filter="url(#trees)"/><path d="M31.8 13.5 L30.8 42.0" stroke="#161616" stroke-width="2.6" opacity=".7"/><path d="M51.2 13.5 L54.1 42.0" stroke="#161616" stroke-width="2.8" opacity=".7"/><polygon points="1,13.5 82,13.5 73,42 10,42" fill="url(#fshade)"/></g></svg>
<span style="position:absolute;left:574.5px;top:275.3px;font-size:9px;line-height:11px;color:#111;white-space:nowrap;letter-spacing:0.12px;">Rotated horizontal 2</span>
<svg style="position:absolute;left:693.5px;top:214px;overflow:hidden" width="81" height="56" viewBox="0 0 81 56"><g filter="url(#soft2)"><clipPath id="cp85165"><polygon points="7.5,9 76.5,9 82,46 1,46"/></clipPath><g clip-path="url(#cp85165)"><rect width="81" height="56" fill="url(#lake)"/><path d="M0 6 L8 3 L20 12 L30 18 V30 H0Z" fill="#5a5a5a"/><path d="M0 10 L6 8 L14 16 L4 22 L0 20Z" fill="#8a8a8a"/><path d="M58 26 L70 20 L81 24 V32 H58Z" fill="#555"/><path d="M0 36 Q14 34 26 42 Q14 50 0 52Z" fill="#3f3f3f"/></g><polygon points="1,17 82,17 72.5,37 9,37" fill="#777" filter="url(#trees)"/><path d="M31.8 17.0 L30.0 37.0" stroke="#161616" stroke-width="2.6" opacity=".7"/><path d="M51.2 17.0 L53.4 37.0" stroke="#161616" stroke-width="2.8" opacity=".7"/><polygon points="1,17 82,17 72.5,37 9,37" fill="url(#fshade)"/></g></svg>
<span style="position:absolute;left:692.5px;top:275.3px;font-size:9px;line-height:11px;color:#111;white-space:nowrap;letter-spacing:0.12px;">Rotated horizontal 3</span>
<svg style="position:absolute;left:458px;top:307px;overflow:hidden" width="81" height="56" viewBox="0 0 81 56"><g filter="url(#soft2)"><rect width="81" height="56" fill="url(#lake)"/><path d="M0 6 L8 3 L20 12 L30 18 V30 H0Z" fill="#5a5a5a"/><path d="M0 10 L6 8 L14 16 L4 22 L0 20Z" fill="#8a8a8a"/><path d="M58 26 L70 20 L81 24 V32 H58Z" fill="#555"/><path d="M0 36 Q14 34 26 42 Q14 50 0 52Z" fill="#3f3f3f"/><polygon points="20.7,6 61.5,0 61.5,56 20.7,47.5" fill="#777" filter="url(#trees)"/><path d="M36.2 3.7 L34.2 50.3" stroke="#161616" stroke-width="2.6" opacity=".7"/><path d="M46.0 2.3 L49.3 53.5" stroke="#161616" stroke-width="2.8" opacity=".7"/><polygon points="20.7,6 61.5,0 61.5,56 20.7,47.5" fill="url(#fshade)"/></g></svg>
<span style="position:absolute;left:484.0px;top:368.3px;font-size:9px;line-height:11px;color:#111;white-space:nowrap;letter-spacing:-0.06px;">Vertical</span>
<svg style="position:absolute;left:575.5px;top:307px;overflow:hidden" width="81" height="56" viewBox="0 0 81 56"><g filter="url(#soft2)"><polygon points="21,6 62.5,0 62.5,56 21,47.5" fill="#777" filter="url(#trees)"/><path d="M36.8 3.7 L34.7 50.3" stroke="#161616" stroke-width="2.6" opacity=".7"/><path d="M46.7 2.3 L50.0 53.5" stroke="#161616" stroke-width="2.8" opacity=".7"/><polygon points="21,6 62.5,0 62.5,56 21,47.5" fill="url(#fshade)"/></g></svg>
<span style="position:absolute;left:597.5px;top:368.3px;font-size:9px;line-height:11px;color:#111;white-space:nowrap;letter-spacing:-0.00px;">Vertical 2</span>
<svg style="position:absolute;left:693.5px;top:307px;overflow:visible" width="81" height="56" viewBox="0 0 81 56"><defs><linearGradient id="v3s" x1="0" y1="0" x2="0" y2="1"><stop offset="0" stop-color="#3f55c0"/><stop offset=".42" stop-color="#a8b8e8"/><stop offset=".5" stop-color="#4a5a6a"/><stop offset=".6" stop-color="#6a80d0"/><stop offset="1" stop-color="#4a5cb8"/></linearGradient><pattern id="forestc" width="30" height="60" patternUnits="userSpaceOnUse"><rect width="30" height="60" fill="#4f9a70"/><rect width="3.5" height="60" fill="#1a3324"/><rect x="5" width="2" height="60" fill="#bfe6d4"/><rect x="8" width="3" height="60" fill="#25503a"/><rect x="12" width="2" height="60" fill="#d8f0e4"/><rect x="15" width="4" height="60" fill="#16301f"/><rect x="21" width="1.5" height="60" fill="#a8d8c0"/><rect x="23" width="3" height="60" fill="#2a5a40"/><rect x="27" width="1.5" height="60" fill="#7fc0a0"/></pattern></defs><g filter="url(#soft2)"><polygon points="15.7,0 68.5,4 68.5,51 15.7,56" fill="url(#v3s)"/><path d="M15.7 8 L22 6 L30 16 L34 26 L15.7 30Z" fill="#7f88a0"/><path d="M58 24 L66 20 L68.5 22 V28 H58Z" fill="#5a6890"/><polygon points="15.7,34 30,38 30,54 15.7,56" fill="#4a2434" opacity=".85"/><polygon points="27.7,9 57,0 57,56 27.7,45" fill="#484" filter="url(#treesc)"/><polygon points="27.7,9 57,0 57,56 27.7,45" fill="url(#fshade)" opacity=".5"/></g></svg>
<span style="position:absolute;left:715.5px;top:368.3px;font-size:9px;line-height:11px;color:#111;white-space:nowrap;letter-spacing:-0.00px;text-decoration:underline;">Vertical 3</span>
<div style="position:absolute;left:826px;top:125px;width:259px;height:216px;background:#000;"></div>
<svg style="position:absolute;left:826px;top:160px;overflow:hidden" width="258" height="146" viewBox="0 0 258 146"><defs><linearGradient id="bds" x1="0" y1="0" x2="0" y2="1"><stop offset="0" stop-color="#18479a"/><stop offset=".45" stop-color="#2f6fc0"/><stop offset="1" stop-color="#a5c8ea"/></linearGradient>
<linearGradient id="bdw" x1="0" y1="0" x2="0" y2="1"><stop offset="0" stop-color="#8ea2aa"/><stop offset=".35" stop-color="#66797f"/><stop offset="1" stop-color="#465a60"/></linearGradient>
<radialGradient id="bdh" cx="50%" cy="40%" r="60%"><stop offset="0" stop-color="#e0a862"/><stop offset=".6" stop-color="#c98235"/><stop offset="1" stop-color="#a8611f"/></radialGradient>
<filter id="bdb" x="-5%" y="-5%" width="110%" height="110%"><feGaussianBlur stdDeviation="0.7"/></filter><filter id="bdb2" x="-5%" y="-5%" width="110%" height="110%"><feGaussianBlur stdDeviation="2.2"/></filter></defs>
<rect x="-3" y="-3" width="264" height="92" fill="url(#bds)"/><g filter="url(#bdb)"><ellipse cx="148" cy="29" rx="26" ry="7.5" fill="#fff" opacity="0.95"/><circle cx="129.8" cy="25.7" r="7.3" fill="#fff" opacity="0.95"/><circle cx="137.1" cy="26.1" r="7.3" fill="#fff" opacity="0.95"/><circle cx="144.4" cy="26.3" r="6.6" fill="#fff" opacity="0.95"/><circle cx="151.6" cy="27.4" r="7.9" fill="#fff" opacity="0.95"/><circle cx="158.9" cy="26.1" r="7.6" fill="#fff" opacity="0.95"/><circle cx="166.2" cy="25.8" r="5.7" fill="#fff" opacity="0.95"/><ellipse cx="149" cy="34.5" rx="22.1" ry="3.5" fill="#c8d6e8" opacity=".55"/><ellipse cx="209" cy="16" rx="20" ry="10.5" fill="#fff" opacity="0.95"/><circle cx="195.0" cy="12.0" r="9.3" fill="#fff" opacity="0.95"/><circle cx="202.0" cy="12.3" r="10.3" fill="#fff" opacity="0.95"/><circle cx="209.0" cy="13.2" r="10.6" fill="#fff" opacity="0.95"/><circle cx="216.0" cy="12.9" r="9.5" fill="#fff" opacity="0.95"/><circle cx="223.0" cy="12.6" r="11.3" fill="#fff" opacity="0.95"/><ellipse cx="210" cy="23.7" rx="17.0" ry="4.9" fill="#c8d6e8" opacity=".55"/><ellipse cx="250" cy="19" rx="10" ry="7.5" fill="#fff" opacity="0.95"/><circle cx="243.0" cy="16.0" r="8.6" fill="#fff" opacity="0.95"/><circle cx="250.0" cy="16.8" r="6.4" fill="#fff" opacity="0.95"/><circle cx="257.0" cy="16.2" r="7.1" fill="#fff" opacity="0.95"/><ellipse cx="251" cy="24.5" rx="8.5" ry="3.5" fill="#c8d6e8" opacity=".55"/><ellipse cx="46" cy="60" rx="44" ry="6.0" fill="#fff" opacity="0.9"/><circle cx="15.2" cy="57.3" r="6.7" fill="#fff" opacity="0.9"/><circle cx="21.4" cy="58.8" r="6.6" fill="#fff" opacity="0.9"/><circle cx="27.5" cy="57.8" r="6.9" fill="#fff" opacity="0.9"/><circle cx="33.7" cy="58.6" r="4.9" fill="#fff" opacity="0.9"/><circle cx="39.8" cy="58.3" r="5.3" fill="#fff" opacity="0.9"/><circle cx="46.0" cy="58.2" r="5.2" fill="#fff" opacity="0.9"/><circle cx="52.2" cy="57.6" r="5.9" fill="#fff" opacity="0.9"/><circle cx="58.3" cy="58.8" r="6.0" fill="#fff" opacity="0.9"/><circle cx="64.5" cy="58.7" r="7.0" fill="#fff" opacity="0.9"/><circle cx="70.6" cy="57.2" r="5.2" fill="#fff" opacity="0.9"/><circle cx="76.8" cy="58.6" r="7.4" fill="#fff" opacity="0.9"/><ellipse cx="47" cy="64.4" rx="37.4" ry="2.8" fill="#c8d6e8" opacity=".55"/><ellipse cx="65" cy="54" rx="20" ry="5.2" fill="#fff" opacity="0.95"/><circle cx="51.0" cy="52.0" r="5.5" fill="#fff" opacity="0.95"/><circle cx="58.0" cy="51.4" r="6.1" fill="#fff" opacity="0.95"/><circle cx="65.0" cy="52.5" r="5.2" fill="#fff" opacity="0.95"/><circle cx="72.0" cy="52.9" r="4.2" fill="#fff" opacity="0.95"/><circle cx="79.0" cy="51.9" r="4.3" fill="#fff" opacity="0.95"/><ellipse cx="66" cy="57.9" rx="17.0" ry="2.4" fill="#c8d6e8" opacity=".55"/><ellipse cx="186" cy="69" rx="38" ry="6.0" fill="#fff" opacity="0.85"/><circle cx="159.4" cy="68.0" r="7.4" fill="#fff" opacity="0.85"/><circle cx="166.1" cy="66.1" r="6.0" fill="#fff" opacity="0.85"/><circle cx="172.7" cy="66.4" r="5.6" fill="#fff" opacity="0.85"/><circle cx="179.3" cy="67.3" r="5.1" fill="#fff" opacity="0.85"/><circle cx="186.0" cy="66.6" r="4.8" fill="#fff" opacity="0.85"/><circle cx="192.7" cy="66.4" r="4.5" fill="#fff" opacity="0.85"/><circle cx="199.3" cy="67.1" r="7.6" fill="#fff" opacity="0.85"/><circle cx="205.9" cy="67.6" r="4.8" fill="#fff" opacity="0.85"/><circle cx="212.6" cy="66.4" r="7.1" fill="#fff" opacity="0.85"/><ellipse cx="187" cy="73.4" rx="32.3" ry="2.8" fill="#c8d6e8" opacity=".55"/><ellipse cx="243" cy="55" rx="11" ry="4.9" fill="#fff" opacity="0.95"/><circle cx="235.3" cy="53.0" r="5.7" fill="#fff" opacity="0.95"/><circle cx="243.0" cy="54.3" r="4.1" fill="#fff" opacity="0.95"/><circle cx="250.7" cy="53.3" r="5.7" fill="#fff" opacity="0.95"/><ellipse cx="244" cy="58.6" rx="9.3" ry="2.3" fill="#c8d6e8" opacity=".55"/><ellipse cx="181" cy="11.5" rx="4" ry="2.2" fill="#fff" opacity="0.95"/><circle cx="178.2" cy="11.2" r="1.8" fill="#fff" opacity="0.95"/><circle cx="181.0" cy="11.6" r="2.2" fill="#fff" opacity="0.95"/><circle cx="183.8" cy="10.5" r="2.4" fill="#fff" opacity="0.95"/><ellipse cx="182" cy="13.2" rx="3.4" ry="1.0" fill="#c8d6e8" opacity=".55"/><ellipse cx="164" cy="4" rx="4" ry="1.9" fill="#fff" opacity="0.8"/><circle cx="161.2" cy="3.6" r="2.3" fill="#fff" opacity="0.8"/><circle cx="164.0" cy="3.9" r="1.5" fill="#fff" opacity="0.8"/><circle cx="166.8" cy="2.8" r="2.0" fill="#fff" opacity="0.8"/><ellipse cx="165" cy="5.4" rx="3.4" ry="0.9" fill="#c8d6e8" opacity=".55"/><ellipse cx="176" cy="4" rx="3" ry="1.5" fill="#fff" opacity="0.7"/><circle cx="173.9" cy="3.5" r="1.5" fill="#fff" opacity="0.7"/><circle cx="176.0" cy="3.0" r="1.2" fill="#fff" opacity="0.7"/><circle cx="178.1" cy="3.7" r="1.2" fill="#fff" opacity="0.7"/><ellipse cx="177" cy="5.1" rx="2.5" ry="0.7" fill="#c8d6e8" opacity=".55"/><path d="M-2 70 Q10 66 24 70 Q40 70 56 76 Q76 80 100 82 L100 86 H-2Z" fill="#2f4a22"/><path d="M-2 84 Q30 83 60 86 H-2Z" fill="#b08050"/><path d="M150 84 Q180 80 205 78 Q232 72 260 62 V88 H150Z" fill="#3f5a2c"/><path d="M216 82 Q236 74 260 69 V87 H216Z" fill="#b5502a"/><rect x="-3" y="85" width="264" height="64" fill="url(#bdw)"/></g><g filter="url(#bdb2)"><path d="M40 146 Q44 118 66 108 L90 112 L90 146Z" fill="#f2f5f6"/><path d="M160 146 L160 118 L188 114 Q208 124 214 146Z" fill="#eef2f4"/><ellipse cx="22" cy="89" rx="16" ry="2.2" fill="#e8eef0"/><path d="M-2 100 Q20 96 44 104 L40 146 H-2Z" fill="#3f5258" opacity=".55"/><path d="M60 100 H190 V120 H60Z" fill="#dfe6e8" opacity=".5"/></g><g filter="url(#bdb)"><path d="M39 92 Q42 85 52 85 L60 90 L58 100 L48 104 Q40 100 39 92Z" fill="#d9a07c"/><path d="M176 97 Q186 93 196 98 Q198 106 190 110 L178 109Z" fill="#d9a07c"/><path d="M54 93 L76 91 L76 103 L56 105Z" fill="#26282b"/><path d="M166 96 L180 98 L180 111 L167 108Z" fill="#26282b"/><path d="M64 84 Q84 80 104 78 L108 90 Q84 90 66 90Z" fill="#c27a30"/><path d="M72 91 Q86 88 100 90 Q118 96 128 100 Q142 94 156 93 L170 98 L171 109 L157 116 L157 147 L87 147 L87 112 L72 105Z" fill="#a9a9a4"/><path d="M100 90 Q118 96 128 100 L128 147 L87 147 L87 112Z" fill="#9c9c97"/><path d="M68 147 Q70 134 86 130 L88 147Z" fill="#d9966a"/><path d="M156 136 Q168 134 172 147 H156Z" fill="#d9966a"/><path d="M87 133 Q100 130 112 147 H87Z" fill="#27408a"/><path d="M138 147 Q146 134 157 136 V147Z" fill="#27408a"/><path d="M158 118 L162 134" stroke="#c0392b" stroke-width="2"/><path d="M100 80 Q104 66 114 62 Q126 58 138 63 Q148 68 150 82 Q154 96 152 112 Q148 120 140 116 Q134 104 132 96 Q118 98 104 90Z" fill="#c8802f"/><path d="M112 70 Q124 66 138 72 Q140 84 134 92 Q120 92 112 84Z" fill="#d99a4a" opacity=".8"/><path d="M133 96 Q140 90 150 96 Q154 108 150 116 Q142 122 136 114Z" fill="#d4903f"/><ellipse cx="125" cy="46" rx="16" ry="19" fill="url(#bdh)"/><path d="M108 42 Q106 58 112 68 L118 62 Q112 52 114 38Z" fill="#a8601f"/><path d="M142 42 Q144 58 138 68 L133 62 Q138 52 136 38Z" fill="#a8601f"/><ellipse cx="126" cy="42.5" rx="3.6" ry="2.6" fill="#2a1a10"/><path d="M118 36 Q120 34.5 122 36 M130 36 Q132 34.5 134 36" stroke="#5a3515" stroke-width="1" fill="none"/><path d="M119 50 Q126 54 133 50" stroke="#8a4f1a" stroke-width="1.2" fill="none"/></g></svg>
<span style="position:absolute;left:1031.0px;top:344.8px;font-size:9px;line-height:11px;color:#111;white-space:nowrap;letter-spacing:0.22px;">00:00/00:05</span>
<div style="position:absolute;left:828px;top:359px;width:253px;height:5px;background:#e6e6e6;border:1px solid #bcbcbc;"></div>
<div style="position:absolute;left:826px;top:370px;width:18px;height:17px;background:#e5f1fb;border:2px solid #2a7fd4;"></div>
<svg style="position:absolute;left:831px;top:373px;" width="9" height="11" viewBox="0 0 9 11"><path d="M1 0.5 V10.5 L8.5 5.5Z" fill="#111"/></svg>
<div style="position:absolute;left:847px;top:370px;width:17px;height:17px;background:#e1e1e1;border:1px solid #adadad;"></div>
<div style="position:absolute;left:851px;top:374px;width:9px;height:9px;background:#111;"></div>
<svg style="position:absolute;left:1048px;top:370px;" width="34" height="15" viewBox="0 0 34 15"><rect x="0.0" y="11.0" width="2.2" height="2.0" fill="#2a72c8"/><rect x="3.3" y="9.8" width="2.2" height="3.1" fill="#2a72c8"/><rect x="6.6" y="8.7" width="2.2" height="4.3" fill="#2a72c8"/><rect x="9.9" y="7.6" width="2.2" height="5.4" fill="#2a72c8"/><rect x="13.2" y="6.4" width="2.2" height="6.6" fill="#2a72c8"/><rect x="16.5" y="5.2" width="2.2" height="7.8" fill="#2a72c8"/><rect x="19.8" y="4.1" width="2.2" height="8.9" fill="#2a72c8"/><rect x="23.1" y="3.0" width="2.2" height="10.0" fill="#2a72c8"/><rect x="26.4" y="1.8" width="2.2" height="11.2" fill="#2a72c8"/><rect x="29.7" y="0.7" width="2.2" height="12.3" fill="#2a72c8"/></svg>
<div style="position:absolute;left:314px;top:398px;width:778px;height:24px;background:#dcdcea;"></div>
<div style="position:absolute;left:315px;top:399px;width:532px;height:22px;background:#f6f7fb;border-radius:2px;"></div>
<div style="position:absolute;left:848px;top:399px;width:141px;height:22px;background:#f6f7fb;border-radius:2px;"></div>
<svg style="position:absolute;left:316px;top:402px;" width="4" height="16" viewBox="0 0 4 16"><g fill="#555"><rect x="1" y="1" width="1.3" height="1.3"/><rect x="1" y="4" width="1.3" height="1.3"/><rect x="1" y="7" width="1.3" height="1.3"/><rect x="1" y="10" width="1.3" height="1.3"/><rect x="1" y="13" width="1.3" height="1.3"/></g></svg>
<svg style="position:absolute;left:850px;top:402px;" width="4" height="16" viewBox="0 0 4 16"><g fill="#555"><rect x="1" y="1" width="1.3" height="1.3"/><rect x="1" y="4" width="1.3" height="1.3"/><rect x="1" y="7" width="1.3" height="1.3"/><rect x="1" y="10" width="1.3" height="1.3"/><rect x="1" y="13" width="1.3" height="1.3"/></g></svg>
<svg style="position:absolute;left:324px;top:403px;" width="13" height="13" viewBox="0 0 13 13"><path d="M4.5 0.5 H8.5 V4.5 H12.5 V8.5 H8.5 V12.5 H4.5 V8.5 H0.5 V4.5 H4.5Z" fill="#5fc020" stroke="#3f9a10" stroke-width=".8"/></svg>
<span style="position:absolute;left:340.0px;top:404.3px;font-size:10px;line-height:12px;color:#111;white-space:nowrap;letter-spacing:-0.26px;">Add files</span>
<svg style="position:absolute;left:381px;top:408px;" width="7" height="5" viewBox="0 0 7 5"><path d="M0.5 0.5 H6.5 L3.5 4Z" fill="#333"/></svg>
<svg style="position:absolute;left:392px;top:403px;" width="13" height="13" viewBox="0 0 13 13"><path d="M4.5 0.5 H8.5 V4.5 H12.5 V8.5 H8.5 V12.5 H4.5 V8.5 H0.5 V4.5 H4.5Z" fill="#d5d8e2" stroke="#b5b9c8" stroke-width=".8"/></svg>
<span style="position:absolute;left:408.5px;top:404.3px;font-size:10px;line-height:12px;color:#a5a5a5;white-space:nowrap;letter-spacing:-0.29px;">Add effect</span>
<svg style="position:absolute;left:456px;top:408px;" width="7" height="5" viewBox="0 0 7 5"><path d="M0.5 0.5 H6.5 L3.5 4Z" fill="#b5b5b5"/></svg>
<svg style="position:absolute;left:468px;top:406px;" width="12" height="6" viewBox="0 0 12 6"><rect x="0.5" y="0.5" width="11" height="4.5" fill="#e0402a" stroke="#b02818" stroke-width=".8"/><rect x="1" y="1" width="10" height="1.5" fill="#f08070"/></svg>
<span style="position:absolute;left:484.0px;top:404.3px;font-size:10px;line-height:12px;color:#111;white-space:nowrap;letter-spacing:-0.87px;">Remove</span>
<svg style="position:absolute;left:521px;top:408px;" width="7" height="5" viewBox="0 0 7 5"><path d="M0.5 0.5 H6.5 L3.5 4Z" fill="#333"/></svg>
<div style="position:absolute;left:531px;top:402px;width:1px;height:16px;background:#cfd2dc;"></div>
<svg style="position:absolute;left:536px;top:403px;" width="14" height="14" viewBox="0 0 14 14"><rect x="0.5" y="0.5" width="13" height="13" fill="#2a62b8" stroke="#7aa0d8"/><path d="M3 10 L10 3" stroke="#9fc8f0" stroke-width="1"/><circle cx="9" cy="5" r="1" fill="#fff"/></svg>
<span style="position:absolute;left:553.0px;top:404.3px;font-size:10px;line-height:12px;color:#111;white-space:nowrap;letter-spacing:-0.46px;">Select all</span>
<svg style="position:absolute;left:594px;top:408px;" width="7" height="5" viewBox="0 0 7 5"><path d="M0.5 0.5 H6.5 L3.5 4Z" fill="#333"/></svg>
<div style="position:absolute;left:604px;top:402px;width:1px;height:16px;background:#cfd2dc;"></div>
<svg style="position:absolute;left:610px;top:405px;" width="12" height="10" viewBox="0 0 12 10"><rect x="0.5" y="0.5" width="1.8" height="9" fill="#111"/><path d="M7 0.5 V9.5 L2.5 5Z M11.5 0.5 V9.5 L7 5Z" fill="#111"/></svg>
<svg style="position:absolute;left:630px;top:405px;" width="11" height="10" viewBox="0 0 11 10"><path d="M5.5 0.5 V9.5 L0.5 5Z M10.5 0.5 V9.5 L5.5 5Z" fill="#111"/></svg>
<svg style="position:absolute;left:647px;top:405px;" width="11" height="10" viewBox="0 0 11 10"><path d="M0.5 0.5 V9.5 L5.5 5Z M5.5 0.5 V9.5 L10.5 5Z" fill="#111"/></svg>
<svg style="position:absolute;left:666px;top:405px;" width="12" height="10" viewBox="0 0 12 10"><path d="M0.5 0.5 V9.5 L5 5Z M5 0.5 V9.5 L9.5 5Z" fill="#111"/><rect x="9.7" y="0.5" width="1.8" height="9" fill="#111"/></svg>
<div style="position:absolute;left:682px;top:402px;width:1px;height:16px;background:#cfd2dc;"></div>
<span style="position:absolute;left:687.5px;top:404.3px;font-size:10px;line-height:12px;color:#111;white-space:nowrap;letter-spacing:-0.18px;">Duration:</span>
<div style="position:absolute;left:731px;top:401px;width:86px;height:18px;background:#fff;border:1px solid #d9dbe3;"></div>
<span style="position:absolute;left:733.5px;top:404.3px;font-size:10px;line-height:12px;color:#111;white-space:nowrap;letter-spacing:-0.81px;">5000</span>
<svg style="position:absolute;left:820px;top:403px;" width="12" height="13" viewBox="0 0 12 13"><path d="M1.5 7 L4.5 11.5 L10.5 1.5" fill="none" stroke="#3fae2a" stroke-width="2"/></svg>
<svg style="position:absolute;left:837px;top:411px;" width="7" height="8" viewBox="0 0 7 8"><rect x="1" y="0.5" width="5" height="1.2" fill="#333"/><path d="M1 3.5 H6 L3.5 6.5Z" fill="#333"/></svg>
<svg style="position:absolute;left:857px;top:403px;" width="13" height="13" viewBox="0 0 13 13"><path d="M3 0.5 V10 H12.5 M0.5 3 H10 V12.5" fill="none" stroke="#222" stroke-width="1.5"/><path d="M3 10 L10 3" stroke="#222" stroke-width="1"/></svg>
<svg style="position:absolute;left:875px;top:403px;" width="12" height="13" viewBox="0 0 12 13"><path d="M3 1 L8 9 M9 1 L4 9" stroke="#c5c8d4" stroke-width="1.2"/><circle cx="3" cy="11" r="1.6" fill="none" stroke="#c5c8d4"/><circle cx="9" cy="11" r="1.6" fill="none" stroke="#c5c8d4"/></svg>
<div style="position:absolute;left:892px;top:402px;width:1px;height:16px;background:#cfd2dc;"></div>
<svg style="position:absolute;left:897px;top:403px;" width="14" height="13" viewBox="0 0 14 13"><rect x="1" y="4" width="6" height="6" fill="#d03030"/><rect x="7" y="5" width="6" height="6" fill="#2a62b8"/><path d="M4 3 L8 0.5 L12 3 L8 5.5Z" fill="#3fae5a"/></svg>
<svg style="position:absolute;left:911px;top:408px;" width="7" height="5" viewBox="0 0 7 5"><path d="M0.5 0.5 H6.5 L3.5 4Z" fill="#333"/></svg>
<svg style="position:absolute;left:922px;top:403px;" width="14" height="13" viewBox="0 0 14 13"><rect x="0.5" y="0.5" width="13" height="12" fill="#eef2fa" stroke="#8a9ab8"/><rect x="0.5" y="0.5" width="13" height="3" fill="#8aa0c8"/><path d="M5 3.5 V12.5 M9.5 3.5 V12.5 M1 6.5 H13.5 M1 9.5 H13.5" stroke="#b5c0d8" stroke-width=".8"/></svg>
<div style="position:absolute;left:939px;top:402px;width:1px;height:16px;background:#cfd2dc;"></div>
<div style="position:absolute;left:943px;top:400px;width:18px;height:18px;background:#fdf0b8;border:1px solid #f8e08a;border-radius:2px;"></div>
<svg style="position:absolute;left:945px;top:402px;" width="14" height="14" viewBox="0 0 14 14"><path d="M10.5 10 A4.6 4.6 0 1 1 9.5 3.4" fill="none" stroke="#5f3a9a" stroke-width="2.6"/><path d="M7.5 0.5 L12.5 2.5 L9 6.5Z" fill="#6a3aa8"/></svg>
<svg style="position:absolute;left:963px;top:402px;" width="14" height="14" viewBox="0 0 14 14"><path d="M3.5 10 A4.6 4.6 0 1 0 4.5 3.4" fill="none" stroke="#5f3a9a" stroke-width="2.6"/><path d="M6.5 0.5 L1.5 2.5 L5 6.5Z" fill="#6a3aa8"/></svg>
<svg style="position:absolute;left:981px;top:411px;" width="7" height="8" viewBox="0 0 7 8"><rect x="1" y="0.5" width="5" height="1.2" fill="#333"/><path d="M1 3.5 H6 L3.5 6.5Z" fill="#333"/></svg>
<div style="position:absolute;left:314px;top:422px;width:778px;height:174px;background:#f1f1f1;border-top:1px solid #d5d5d5;border-bottom:1px solid #d0d0d0;"></div>
<div style="position:absolute;left:1075px;top:423px;width:16px;height:172px;background:#f1f1f1;"></div>
<svg style="position:absolute;left:1078px;top:425px;" width="10" height="7" viewBox="0 0 10 7"><path d="M1.5 5.5 L5 2 L8.5 5.5" fill="none" stroke="#333" stroke-width="1.5"/></svg>
<svg style="position:absolute;left:1078px;top:584px;" width="10" height="7" viewBox="0 0 10 7"><path d="M1.5 1.5 L5 5 L8.5 1.5" fill="none" stroke="#333" stroke-width="1.5"/></svg>
<div style="position:absolute;left:321px;top:429px;width:75px;height:57px;background:#e9e9e9;border:1px solid #cfcfcf;border-radius:2px;box-shadow:0 1px 1px rgba(0,0,0,.25);"></div>
<svg style="position:absolute;left:324px;top:432px;overflow:hidden" width="69" height="50" viewBox="0 0 100 72" preserveAspectRatio="none"><g filter="url(#soft)"><defs><linearGradient id="p1s" x1="0" y1="0" x2="0" y2="1"><stop offset="0" stop-color="#2f6fc8"/><stop offset="1" stop-color="#9fcdf0"/></linearGradient>
<linearGradient id="p1w" x1="0" y1="0" x2="0" y2="1"><stop offset="0" stop-color="#2fb8b0"/><stop offset=".5" stop-color="#5fdccb"/><stop offset="1" stop-color="#a8efe0"/></linearGradient></defs>
<rect width="100" height="72" fill="url(#p1s)"/>
<ellipse cx="12" cy="16" rx="12" ry="6" fill="#fff" opacity=".9"/><ellipse cx="40" cy="10" rx="9" ry="4" fill="#fff" opacity=".85"/><ellipse cx="78" cy="18" rx="14" ry="5" fill="#fff" opacity=".9"/><ellipse cx="62" cy="24" rx="10" ry="3" fill="#fff" opacity=".8"/>
<rect y="30" width="100" height="42" fill="url(#p1w)"/>
<path d="M18 24 L26 19 L34 24 V31 H18Z M36 25 L47 18 L58 25 V33 H36Z M60 24 L72 17 L84 24 V34 H60Z M84 26 L92 21 L100 26 V35 H84Z" fill="#6a5238"/>
<rect x="14" y="31" width="86" height="5" fill="#3a3a30" opacity=".75"/>
<path d="M0 46 Q25 40 50 47 T100 44" stroke="#d8fff5" stroke-width="1.5" fill="none" opacity=".6"/><path d="M0 58 Q30 52 60 60 T100 56" stroke="#e8fff8" stroke-width="2" fill="none" opacity=".6"/></g></svg>
<span style="position:absolute;left:320.0px;top:487.3px;font-size:9px;line-height:11px;color:#111;white-space:nowrap;letter-spacing:-0.44px;">iu-0DMcZ_X8.j...</span>
<span style="position:absolute;left:320.0px;top:497.3px;font-size:9px;line-height:11px;color:#111;white-space:nowrap;letter-spacing:-0.55px;">00:00:05.000</span>
<svg style="position:absolute;left:382px;top:491px;" width="14" height="14" viewBox="0 0 14 14"><path d="M1.5 1.5 L12.5 12.5 M12.5 1.5 L1.5 12.5" stroke="#444" stroke-width="1.4"/></svg>
<div style="position:absolute;left:463px;top:429px;width:75px;height:57px;background:#e9e9e9;border:1px solid #cfcfcf;border-radius:2px;box-shadow:0 1px 1px rgba(0,0,0,.25);"></div>
<svg style="position:absolute;left:466px;top:432px;overflow:hidden" width="69" height="50" viewBox="0 0 100 72" preserveAspectRatio="none"><g filter="url(#soft)"><defs><linearGradient id="p2" x1="0" y1="0" x2="0" y2="1"><stop offset="0" stop-color="#2a84cc"/><stop offset=".6" stop-color="#4fa8e0"/><stop offset="1" stop-color="#9fd8f0"/></linearGradient></defs>
<rect width="100" height="72" fill="url(#p2)"/>
<path d="M8 8 L24 6 L34 60 L30 72 H22 L20 60Z" fill="#25313c"/><path d="M12 12 L21 10 L27 50 L23 52Z" fill="#8fa0ad" opacity=".7"/>
<path d="M92 8 L76 6 L68 60 L70 72 H80 L82 60Z" fill="#25313c"/><path d="M88 12 L80 10 L74 50 L78 52Z" fill="#8fa0ad" opacity=".7"/>
<path d="M36 22 Q50 12 64 22 L70 18 L66 26 Q50 32 36 22Z" fill="#7d8f9a"/><path d="M48 16 L52 8 L54 17Z" fill="#7d8f9a"/>
<g fill="#1f4f7a" opacity=".6"><circle cx="44" cy="44" r="1"/><circle cx="55" cy="50" r="1"/><circle cx="50" cy="38" r="1"/><circle cx="60" cy="42" r="1"/><circle cx="40" cy="55" r="1"/></g></g></svg>
<span style="position:absolute;left:462.0px;top:487.3px;font-size:9px;line-height:11px;color:#111;white-space:nowrap;letter-spacing:-0.16px;">uZugx-hhPlk.j...</span>
<span style="position:absolute;left:462.0px;top:497.3px;font-size:9px;line-height:11px;color:#111;white-space:nowrap;letter-spacing:-0.55px;">00:00:05.000</span>
<svg style="position:absolute;left:524px;top:491px;" width="14" height="14" viewBox="0 0 14 14"><path d="M1.5 1.5 L12.5 12.5 M12.5 1.5 L1.5 12.5" stroke="#444" stroke-width="1.4"/></svg>
<div style="position:absolute;left:605px;top:429px;width:75px;height:57px;background:#e9e9e9;border:1px solid #cfcfcf;border-radius:2px;box-shadow:0 1px 1px rgba(0,0,0,.25);"></div>
<svg style="position:absolute;left:608px;top:432px;overflow:hidden" width="69" height="50" viewBox="0 0 100 72" preserveAspectRatio="none"><g filter="url(#soft)"><defs><linearGradient id="p3" x1="0" y1="0" x2="0" y2="1"><stop offset="0" stop-color="#b8d4dc"/><stop offset=".18" stop-color="#6fa8b0"/><stop offset=".5" stop-color="#2f7a78"/><stop offset="1" stop-color="#1a4f50"/></linearGradient></defs>
<rect width="100" height="72" fill="url(#p3)"/>
<path d="M0 4 Q50 -6 100 14 V0 H0Z" fill="#dfe8ec"/><path d="M0 4 L16 5 Q4 10 0 16Z" fill="#15202a"/><path d="M60 6 Q84 8 100 18 V12 Q84 4 60 2Z" fill="#5f7f88" opacity=".7"/>
<path d="M100 30 Q96 56 80 72 H100Z M0 50 Q4 64 14 72 H0Z" fill="#123a3c" opacity=".7"/>
<path d="M32 14 Q44 11 58 15 Q46 19 32 14Z" fill="#dfe4e0"/><path d="M28 26 Q44 22 64 27 Q46 32 28 26Z" fill="#e8e8dc"/>
<path d="M20 36 Q46 30 78 40 Q80 44 70 45 Q40 46 20 36Z" fill="#f0eee0"/>
<path d="M2 56 Q40 44 82 46 Q90 52 74 60 Q40 70 14 62Z" fill="#f2eccf"/><path d="M6 57 Q24 52 40 54 Q30 64 14 61Z" fill="#e8d890"/>
<path d="M46 10 L50 8 L52 22 L46 24Z M52 9 L56 9 L58 26 L52 26Z M58 14 L62 16 L62 34 L56 32Z" fill="#b5704a"/>
<path d="M48 30 Q58 26 66 34 L68 44 L60 48 L50 42Z" fill="#c07a4a"/><path d="M64 26 Q70 24 70 32 L68 44 L62 42Z" fill="#8a4a30"/>
<path d="M28 50 Q44 40 58 46 Q66 52 64 60 L56 64 Q44 54 34 62 L28 60Z" fill="#b5652a"/><path d="M40 56 Q50 52 58 58 L56 66 L42 66Z" fill="#3a3550"/>
<path d="M30 22 L44 26 M40 16 L52 20" stroke="#26343a" stroke-width="1.6"/><path d="M56 62 L66 72" stroke="#26343a" stroke-width="1.6"/></g></svg>
<span style="position:absolute;left:604.0px;top:487.3px;font-size:9px;line-height:11px;color:#111;white-space:nowrap;letter-spacing:-0.30px;">oJwYrm-ISlE.jpg</span>
<span style="position:absolute;left:604.0px;top:497.3px;font-size:9px;line-height:11px;color:#111;white-space:nowrap;letter-spacing:-0.55px;">00:00:05.000</span>
<svg style="position:absolute;left:666px;top:491px;" width="14" height="14" viewBox="0 0 14 14"><path d="M1.5 1.5 L12.5 12.5 M12.5 1.5 L1.5 12.5" stroke="#444" stroke-width="1.4"/></svg>
<div style="position:absolute;left:745px;top:427px;width:79px;height:61px;background:#dfe3ea;border:1px solid #6a7890;"></div>
<div style="position:absolute;left:747px;top:429px;width:75px;height:57px;background:#fff;border:1px solid #8a94a8;"></div>
<svg style="position:absolute;left:750px;top:432px;overflow:hidden" width="69" height="50" viewBox="0 0 100 72" preserveAspectRatio="none"><g filter="url(#soft)"><rect width="100" height="72" fill="#f4f4ee"/>
<rect width="100" height="28" fill="#2a2430"/><path d="M0 8 Q20 2 40 10 L38 26 H0Z" fill="#3a3048"/><path d="M60 0 H100 V20 Q80 10 60 12Z" fill="#1f3a1a"/>
<path d="M0 27 Q16 24 32 30 V46 H0Z" fill="#3f7a2a"/><path d="M0 44 H30 V52 H0Z" fill="#e8e8c8"/>
<path d="M62 26 Q80 22 100 34 V72 H56 Q70 50 62 26Z" fill="#2f5f22"/><path d="M66 44 Q80 36 100 46 V72 H70Z" fill="#1f401a"/><circle cx="84" cy="62" r="5" fill="#e8f0e0"/><circle cx="88" cy="30" r="3" fill="#d8d8a0"/>
<path d="M40 6 L44 4 L48 22 L42 24Z" fill="#a07a60"/>
<path d="M58 22 Q74 8 100 12 V30 Q84 24 70 36 Q64 42 60 36Z" fill="#a8501f"/>
<path d="M32 40 Q34 22 52 20 Q66 22 66 44 Q66 62 56 72 H44 Q30 62 32 40Z" fill="#4a3324"/><path d="M33 44 Q34 28 46 23" stroke="#a88a70" stroke-width="3" fill="none" opacity=".8"/><path d="M50 24 Q64 30 62 50 Q60 64 54 72" stroke="#7a4a2a" stroke-width="5" fill="none" opacity=".7"/>
<ellipse cx="44" cy="58" rx="8" ry="12" fill="#2a1a18" opacity=".8"/></g></svg>
<span style="position:absolute;left:746.0px;top:487.3px;font-size:9px;line-height:11px;color:#111;white-space:nowrap;letter-spacing:-0.34px;">BupFCCxIe3c....</span>
<span style="position:absolute;left:746.0px;top:497.3px;font-size:9px;line-height:11px;color:#111;white-space:nowrap;letter-spacing:-0.55px;">00:00:05.000</span>
<svg style="position:absolute;left:808px;top:491px;" width="14" height="14" viewBox="0 0 14 14"><path d="M1.5 1.5 L12.5 12.5 M12.5 1.5 L1.5 12.5" stroke="#d03020" stroke-width="1.4"/></svg>
<div style="position:absolute;left:889px;top:429px;width:75px;height:57px;background:#e9e9e9;border:1px solid #cfcfcf;border-radius:2px;box-shadow:0 1px 1px rgba(0,0,0,.25);"></div>
<svg style="position:absolute;left:892px;top:432px;overflow:hidden" width="69" height="50" viewBox="30 0 200 146" preserveAspectRatio="none"><defs><linearGradient id="bds" x1="0" y1="0" x2="0" y2="1"><stop offset="0" stop-color="#18479a"/><stop offset=".45" stop-color="#2f6fc0"/><stop offset="1" stop-color="#a5c8ea"/></linearGradient>
<linearGradient id="bdw" x1="0" y1="0" x2="0" y2="1"><stop offset="0" stop-color="#8ea2aa"/><stop offset=".35" stop-color="#66797f"/><stop offset="1" stop-color="#465a60"/></linearGradient>
<radialGradient id="bdh" cx="50%" cy="40%" r="60%"><stop offset="0" stop-color="#e0a862"/><stop offset=".6" stop-color="#c98235"/><stop offset="1" stop-color="#a8611f"/></radialGradient>
<filter id="bdb" x="-5%" y="-5%" width="110%" height="110%"><feGaussianBlur stdDeviation="0.7"/></filter><filter id="bdb2" x="-5%" y="-5%" width="110%" height="110%"><feGaussianBlur stdDeviation="2.2"/></filter></defs>
<rect x="-3" y="-3" width="264" height="92" fill="url(#bds)"/><g filter="url(#bdb)"><ellipse cx="148" cy="29" rx="26" ry="7.5" fill="#fff" opacity="0.95"/><circle cx="129.8" cy="25.7" r="7.3" fill="#fff" opacity="0.95"/><circle cx="137.1" cy="26.1" r="7.3" fill="#fff" opacity="0.95"/><circle cx="144.4" cy="26.3" r="6.6" fill="#fff" opacity="0.95"/><circle cx="151.6" cy="27.4" r="7.9" fill="#fff" opacity="0.95"/><circle cx="158.9" cy="26.1" r="7.6" fill="#fff" opacity="0.95"/><circle cx="166.2" cy="25.8" r="5.7" fill="#fff" opacity="0.95"/><ellipse cx="149" cy="34.5" rx="22.1" ry="3.5" fill="#c8d6e8" opacity=".55"/><ellipse cx="209" cy="16" rx="20" ry="10.5" fill="#fff" opacity="0.95"/><circle cx="195.0" cy="12.0" r="9.3" fill="#fff" opacity="0.95"/><circle cx="202.0" cy="12.3" r="10.3" fill="#fff" opacity="0.95"/><circle cx="209.0" cy="13.2" r="10.6" fill="#fff" opacity="0.95"/><circle cx="216.0" cy="12.9" r="9.5" fill="#fff" opacity="0.95"/><circle cx="223.0" cy="12.6" r="11.3" fill="#fff" opacity="0.95"/><ellipse cx="210" cy="23.7" rx="17.0" ry="4.9" fill="#c8d6e8" opacity=".55"/><ellipse cx="250" cy="19" rx="10" ry="7.5" fill="#fff" opacity="0.95"/><circle cx="243.0" cy="16.0" r="8.6" fill="#fff" opacity="0.95"/><circle cx="250.0" cy="16.8" r="6.4" fill="#fff" opacity="0.95"/><circle cx="257.0" cy="16.2" r="7.1" fill="#fff" opacity="0.95"/><ellipse cx="251" cy="24.5" rx="8.5" ry="3.5" fill="#c8d6e8" opacity=".55"/><ellipse cx="46" cy="60" rx="44" ry="6.0" fill="#fff" opacity="0.9"/><circle cx="15.2" cy="57.3" r="6.7" fill="#fff" opacity="0.9"/><circle cx="21.4" cy="58.8" r="6.6" fill="#fff" opacity="0.9"/><circle cx="27.5" cy="57.8" r="6.9" fill="#fff" opacity="0.9"/><circle cx="33.7" cy="58.6" r="4.9" fill="#fff" opacity="0.9"/><circle cx="39.8" cy="58.3" r="5.3" fill="#fff" opacity="0.9"/><circle cx="46.0" cy="58.2" r="5.2" fill="#fff" opacity="0.9"/><circle cx="52.2" cy="57.6" r="5.9" fill="#fff" opacity="0.9"/><circle cx="58.3" cy="58.8" r="6.0" fill="#fff" opacity="0.9"/><circle cx="64.5" cy="58.7" r="7.0" fill="#fff" opacity="0.9"/><circle cx="70.6" cy="57.2" r="5.2" fill="#fff" opacity="0.9"/><circle cx="76.8" cy="58.6" r="7.4" fill="#fff" opacity="0.9"/><ellipse cx="47" cy="64.4" rx="37.4" ry="2.8" fill="#c8d6e8" opacity=".55"/><ellipse cx="65" cy="54" rx="20" ry="5.2" fill="#fff" opacity="0.95"/><circle cx="51.0" cy="52.0" r="5.5" fill="#fff" opacity="0.95"/><circle cx="58.0" cy="51.4" r="6.1" fill="#fff" opacity="0.95"/><circle cx="65.0" cy="52.5" r="5.2" fill="#fff" opacity="0.95"/><circle cx="72.0" cy="52.9" r="4.2" fill="#fff" opacity="0.95"/><circle cx="79.0" cy="51.9" r="4.3" fill="#fff" opacity="0.95"/><ellipse cx="66" cy="57.9" rx="17.0" ry="2.4" fill="#c8d6e8" opacity=".55"/><ellipse cx="186" cy="69" rx="38" ry="6.0" fill="#fff" opacity="0.85"/><circle cx="159.4" cy="68.0" r="7.4" fill="#fff" opacity="0.85"/><circle cx="166.1" cy="66.1" r="6.0" fill="#fff" opacity="0.85"/><circle cx="172.7" cy="66.4" r="5.6" fill="#fff" opacity="0.85"/><circle cx="179.3" cy="67.3" r="5.1" fill="#fff" opacity="0.85"/><circle cx="186.0" cy="66.6" r="4.8" fill="#fff" opacity="0.85"/><circle cx="192.7" cy="66.4" r="4.5" fill="#fff" opacity="0.85"/><circle cx="199.3" cy="67.1" r="7.6" fill="#fff" opacity="0.85"/><circle cx="205.9" cy="67.6" r="4.8" fill="#fff" opacity="0.85"/><circle cx="212.6" cy="66.4" r="7.1" fill="#fff" opacity="0.85"/><ellipse cx="187" cy="73.4" rx="32.3" ry="2.8" fill="#c8d6e8" opacity=".55"/><ellipse cx="243" cy="55" rx="11" ry="4.9" fill="#fff" opacity="0.95"/><circle cx="235.3" cy="53.0" r="5.7" fill="#fff" opacity="0.95"/><circle cx="243.0" cy="54.3" r="4.1" fill="#fff" opacity="0.95"/><circle cx="250.7" cy="53.3" r="5.7" fill="#fff" opacity="0.95"/><ellipse cx="244" cy="58.6" rx="9.3" ry="2.3" fill="#c8d6e8" opacity=".55"/><ellipse cx="181" cy="11.5" rx="4" ry="2.2" fill="#fff" opacity="0.95"/><circle cx="178.2" cy="11.2" r="1.8" fill="#fff" opacity="0.95"/><circle cx="181.0" cy="11.6" r="2.2" fill="#fff" opacity="0.95"/><circle cx="183.8" cy="10.5" r="2.4" fill="#fff" opacity="0.95"/><ellipse cx="182" cy="13.2" rx="3.4" ry="1.0" fill="#c8d6e8" opacity=".55"/><ellipse cx="164" cy="4" rx="4" ry="1.9" fill="#fff" opacity="0.8"/><circle cx="161.2" cy="3.6" r="2.3" fill="#fff" opacity="0.8"/><circle cx="164.0" cy="3.9" r="1.5" fill="#fff" opacity="0.8"/><circle cx="166.8" cy="2.8" r="2.0" fill="#fff" opacity="0.8"/><ellipse cx="165" cy="5.4" rx="3.4" ry="0.9" fill="#c8d6e8" opacity=".55"/><ellipse cx="176" cy="4" rx="3" ry="1.5" fill="#fff" opacity="0.7"/><circle cx="173.9" cy="3.5" r="1.5" fill="#fff" opacity="0.7"/><circle cx="176.0" cy="3.0" r="1.2" fill="#fff" opacity="0.7"/><circle cx="178.1" cy="3.7" r="1.2" fill="#fff" opacity="0.7"/><ellipse cx="177" cy="5.1" rx="2.5" ry="0.7" fill="#c8d6e8" opacity=".55"/><path d="M-2 70 Q10 66 24 70 Q40 70 56 76 Q76 80 100 82 L100 86 H-2Z" fill="#2f4a22"/><path d="M-2 84 Q30 83 60 86 H-2Z" fill="#b08050"/><path d="M150 84 Q180 80 205 78 Q232 72 260 62 V88 H150Z" fill="#3f5a2c"/><path d="M216 82 Q236 74 260 69 V87 H216Z" fill="#b5502a"/><rect x="-3" y="85" width="264" height="64" fill="url(#bdw)"/></g><g filter="url(#bdb2)"><path d="M40 146 Q44 118 66 108 L90 112 L90 146Z" fill="#f2f5f6"/><path d="M160 146 L160 118 L188 114 Q208 124 214 146Z" fill="#eef2f4"/><ellipse cx="22" cy="89" rx="16" ry="2.2" fill="#e8eef0"/><path d="M-2 100 Q20 96 44 104 L40 146 H-2Z" fill="#3f5258" opacity=".55"/><path d="M60 100 H190 V120 H60Z" fill="#dfe6e8" opacity=".5"/></g><g filter="url(#bdb)"><path d="M39 92 Q42 85 52 85 L60 90 L58 100 L48 104 Q40 100 39 92Z" fill="#d9a07c"/><path d="M176 97 Q186 93 196 98 Q198 106 190 110 L178 109Z" fill="#d9a07c"/><path d="M54 93 L76 91 L76 103 L56 105Z" fill="#26282b"/><path d="M166 96 L180 98 L180 111 L167 108Z" fill="#26282b"/><path d="M64 84 Q84 80 104 78 L108 90 Q84 90 66 90Z" fill="#c27a30"/><path d="M72 91 Q86 88 100 90 Q118 96 128 100 Q142 94 156 93 L170 98 L171 109 L157 116 L157 147 L87 147 L87 112 L72 105Z" fill="#a9a9a4"/><path d="M100 90 Q118 96 128 100 L128 147 L87 147 L87 112Z" fill="#9c9c97"/><path d="M68 147 Q70 134 86 130 L88 147Z" fill="#d9966a"/><path d="M156 136 Q168 134 172 147 H156Z" fill="#d9966a"/><path d="M87 133 Q100 130 112 147 H87Z" fill="#27408a"/><path d="M138 147 Q146 134 157 136 V147Z" fill="#27408a"/><path d="M158 118 L162 134" stroke="#c0392b" stroke-width="2"/><path d="M100 80 Q104 66 114 62 Q126 58 138 63 Q148 68 150 82 Q154 96 152 112 Q148 120 140 116 Q134 104 132 96 Q118 98 104 90Z" fill="#c8802f"/><path d="M112 70 Q124 66 138 72 Q140 84 134 92 Q120 92 112 84Z" fill="#d99a4a" opacity=".8"/><path d="M133 96 Q140 90 150 96 Q154 108 150 116 Q142 122 136 114Z" fill="#d4903f"/><ellipse cx="125" cy="46" rx="16" ry="19" fill="url(#bdh)"/><path d="M108 42 Q106 58 112 68 L118 62 Q112 52 114 38Z" fill="#a8601f"/><path d="M142 42 Q144 58 138 68 L133 62 Q138 52 136 38Z" fill="#a8601f"/><ellipse cx="126" cy="42.5" rx="3.6" ry="2.6" fill="#2a1a10"/><path d="M118 36 Q120 34.5 122 36 M130 36 Q132 34.5 134 36" stroke="#5a3515" stroke-width="1" fill="none"/><path d="M119 50 Q126 54 133 50" stroke="#8a4f1a" stroke-width="1.2" fill="none"/></g></svg>
<span style="position:absolute;left:888.0px;top:487.3px;font-size:9px;line-height:11px;color:#111;white-space:nowrap;letter-spacing:-0.31px;">wIL1gPnNWD...</span>
<span style="position:absolute;left:888.0px;top:497.3px;font-size:9px;line-height:11px;color:#111;white-space:nowrap;letter-spacing:-0.55px;">00:00:05.000</span>
<svg style="position:absolute;left:950px;top:491px;" width="14" height="14" viewBox="0 0 14 14"><path d="M1.5 1.5 L12.5 12.5 M12.5 1.5 L1.5 12.5" stroke="#444" stroke-width="1.4"/></svg>
<div style="position:absolute;left:410px;top:442px;width:39px;height:30px;background:linear-gradient(#fafafa,#e4e4e4);border:1px solid #d0d0d0;border-radius:3px;box-shadow:0 1px 1px rgba(0,0,0,.18);"></div>
<svg style="position:absolute;left:416px;top:446px;" width="27" height="22" viewBox="0 0 27 22"><path d="M0 0 H13 L27 11 L13 22 H0 L12 11Z" fill="url(#ag)"/></svg>
<div style="position:absolute;left:552px;top:442px;width:39px;height:30px;background:linear-gradient(#fafafa,#e4e4e4);border:1px solid #d0d0d0;border-radius:3px;box-shadow:0 1px 1px rgba(0,0,0,.18);"></div>
<svg style="position:absolute;left:558px;top:446px;" width="27" height="22" viewBox="0 0 27 22"><path d="M0 0 H13 L27 11 L13 22 H0 L12 11Z" fill="url(#ag)"/></svg>
<div style="position:absolute;left:694px;top:442px;width:39px;height:30px;background:linear-gradient(#fafafa,#e4e4e4);border:1px solid #d0d0d0;border-radius:3px;box-shadow:0 1px 1px rgba(0,0,0,.18);"></div>
<svg style="position:absolute;left:700px;top:446px;" width="27" height="22" viewBox="0 0 27 22"><path d="M0 0 H13 L27 11 L13 22 H0 L12 11Z" fill="url(#ag)"/></svg>
<div style="position:absolute;left:836px;top:442px;width:39px;height:30px;background:linear-gradient(#fafafa,#e4e4e4);border:1px solid #d0d0d0;border-radius:3px;box-shadow:0 1px 1px rgba(0,0,0,.18);"></div>
<svg style="position:absolute;left:842px;top:446px;" width="27" height="22" viewBox="0 0 27 22"><path d="M0 0 H13 L27 11 L13 22 H0 L12 11Z" fill="url(#agg)"/></svg>
<div style="position:absolute;left:978px;top:442px;width:39px;height:30px;background:linear-gradient(#fafafa,#e4e4e4);border:1px solid #d0d0d0;border-radius:3px;box-shadow:0 1px 1px rgba(0,0,0,.18);"></div>
<svg style="position:absolute;left:984px;top:446px;" width="27" height="22" viewBox="0 0 27 22"><path d="M0 0 H13 L27 11 L13 22 H0 L12 11Z" fill="url(#agg)"/></svg>
<div style="position:absolute;left:321px;top:514px;width:75px;height:57px;background:#e9e9e9;border:1px solid #cfcfcf;border-radius:2px;box-shadow:0 1px 1px rgba(0,0,0,.25);"></div>
<svg style="position:absolute;left:324px;top:517px;overflow:hidden" width="69" height="50" viewBox="0 0 100 72" preserveAspectRatio="none"><g filter="url(#soft)"><defs><linearGradient id="p6w" x1="0" y1="0" x2="0" y2="1"><stop offset="0" stop-color="#45c8a8"/><stop offset=".35" stop-color="#2fa080"/><stop offset="1" stop-color="#38b088"/></linearGradient><linearGradient id="p6s" x1="0" y1="0" x2="0" y2="1"><stop offset="0" stop-color="#2f86d8"/><stop offset="1" stop-color="#8fc8f0"/></linearGradient></defs>
<rect width="100" height="72" fill="url(#p6s)"/><ellipse cx="14" cy="22" rx="14" ry="4" fill="#e8f4fc" opacity=".9"/><ellipse cx="84" cy="24" rx="12" ry="4" fill="#e8f4fc" opacity=".9"/><ellipse cx="92" cy="12" rx="7" ry="3" fill="#e8f4fc" opacity=".8"/>
<rect y="30" width="100" height="4" fill="#3fa8c8"/><rect y="33" width="100" height="39" fill="url(#p6w)"/><path d="M50 50 Q76 44 100 50 V72 H60Z" fill="#7fe0b8" opacity=".5"/><path d="M0 40 Q30 36 60 42 Q30 46 0 44Z" fill="#c8f4e0" opacity=".5"/>
<path d="M24 30 Q30 24 48 25 Q60 24 66 16 L74 8 L78 11 L86 22 L82 25 L74 21 Q72 30 66 37 L64 52 H60 L58 40 H38 L36 54 H32 L30 40 Q24 37 24 30Z" fill="#15151c"/>
<path d="M24 30 Q17 36 19 50" stroke="#15151c" stroke-width="3" fill="none"/>
<path d="M38 26 L39 14 Q42 8 45 14 L47 26Z" fill="#d8a880"/><circle cx="42" cy="9" r="2.6" fill="#c9a060"/><path d="M39 18 H46 V22 H39Z" fill="#e8e0d0"/>
<path d="M32 54 Q40 62 34 72 M62 52 Q68 60 62 72" stroke="#1a5a44" stroke-width="3" fill="none" opacity=".75"/></g></svg>
<span style="position:absolute;left:320.0px;top:572.3px;font-size:9px;line-height:11px;color:#111;white-space:nowrap;letter-spacing:-0.47px;">0MIpknUBGK4...</span>
<span style="position:absolute;left:320.0px;top:582.3px;font-size:9px;line-height:11px;color:#111;white-space:nowrap;letter-spacing:-0.55px;">00:00:05.000</span>
<svg style="position:absolute;left:382px;top:576px;" width="14" height="14" viewBox="0 0 14 14"><path d="M1.5 1.5 L12.5 12.5 M12.5 1.5 L1.5 12.5" stroke="#444" stroke-width="1.4"/></svg>
<div style="position:absolute;left:463px;top:514px;width:75px;height:57px;background:#e9e9e9;border:1px solid #cfcfcf;border-radius:2px;box-shadow:0 1px 1px rgba(0,0,0,.25);"></div>
<svg style="position:absolute;left:466px;top:517px;overflow:hidden" width="69" height="50" viewBox="0 0 100 72" preserveAspectRatio="none"><g filter="url(#soft)"><defs><radialGradient id="p7" cx="45%" cy="45%" r="75%"><stop offset="0" stop-color="#f4f6f4"/><stop offset=".6" stop-color="#c8d6e0"/><stop offset="1" stop-color="#a8bcd0"/></radialGradient></defs>
<rect width="100" height="72" fill="url(#p7)"/><path d="M0 50 Q50 44 100 52 V72 H0Z" fill="#a8ae90" opacity=".85"/><path d="M0 60 Q50 54 100 62 V72 H0Z" fill="#8f9878" opacity=".8"/>
<path d="M48 24 L74 15 L80 8 L81 15 L88 14 L83 19 L62 27 L56 34 L53 27Z" fill="#7a8890"/><path d="M52 25 L82 17" stroke="#e8ecee" stroke-width="2"/><path d="M58 14 L66 21 M60 30 L70 19" stroke="#56646c" stroke-width="2.2"/>
<path d="M30 48 Q38 40 46 48 L50 72 H28Z" fill="#c89060"/><circle cx="38" cy="40" r="5.5" fill="#b8804a"/><path d="M30 52 H48 V59 H30Z" fill="#e0b818"/><path d="M32 38 Q38 30 45 38 L45 46 Q40 42 33 45Z" fill="#7a5228"/>
<path d="M44 52 L52 72" stroke="#333" stroke-width="1.6"/><path d="M40 50 L46 58" stroke="#c89060" stroke-width="3"/></g></svg>
<span style="position:absolute;left:462.0px;top:572.3px;font-size:9px;line-height:11px;color:#111;white-space:nowrap;letter-spacing:-0.49px;">ayMAYS0Jv8o....</span>
<span style="position:absolute;left:462.0px;top:582.3px;font-size:9px;line-height:11px;color:#111;white-space:nowrap;letter-spacing:-0.55px;">00:00:05.000</span>
<svg style="position:absolute;left:524px;top:576px;" width="14" height="14" viewBox="0 0 14 14"><path d="M1.5 1.5 L12.5 12.5 M12.5 1.5 L1.5 12.5" stroke="#444" stroke-width="1.4"/></svg>
<div style="position:absolute;left:605px;top:514px;width:75px;height:57px;background:#e9e9e9;border:1px solid #cfcfcf;border-radius:2px;box-shadow:0 1px 1px rgba(0,0,0,.25);"></div>
<svg style="position:absolute;left:608px;top:517px;overflow:hidden" width="69" height="50" viewBox="0 0 100 72" preserveAspectRatio="none"><g filter="url(#soft)"><defs><linearGradient id="p8" x1="0" y1="0" x2="0.3" y2="1"><stop offset="0" stop-color="#2228b0"/><stop offset=".55" stop-color="#4a48d0"/><stop offset=".8" stop-color="#a070d0"/><stop offset="1" stop-color="#c8a0d8"/></linearGradient></defs>
<rect width="100" height="72" fill="url(#p8)"/><path d="M0 56 Q50 48 100 54 V72 H0Z" fill="#d0a8d8" opacity=".6"/>
<path d="M58 12 Q66 6 72 12 Q80 8 84 20 L86 46 Q80 58 72 52 L66 60 L56 58 L58 42 Q52 24 58 12Z" fill="#c8909c" opacity=".95"/><path d="M64 14 Q70 20 68 50 M76 14 Q80 30 78 50" stroke="#a86878" stroke-width="2" fill="none" opacity=".7"/>
<path d="M44 30 Q50 24 58 30 L60 46 L56 64 H46 L42 46Z" fill="#6a3a6a"/><ellipse cx="50" cy="26" rx="6" ry="5" fill="#2a1a30"/>
<path d="M44 42 L38 56 M58 42 L64 54" stroke="#8a5a7a" stroke-width="3"/><path d="M46 64 H58 V72 H44Z" fill="#3a2a4a"/></g></svg>
<span style="position:absolute;left:604.0px;top:572.3px;font-size:9px;line-height:11px;color:#111;white-space:nowrap;letter-spacing:-0.39px;">ffDBUnmT1h4....</span>
<span style="position:absolute;left:604.0px;top:582.3px;font-size:9px;line-height:11px;color:#111;white-space:nowrap;letter-spacing:-0.55px;">00:00:05.000</span>
<svg style="position:absolute;left:666px;top:576px;" width="14" height="14" viewBox="0 0 14 14"><path d="M1.5 1.5 L12.5 12.5 M12.5 1.5 L1.5 12.5" stroke="#444" stroke-width="1.4"/></svg>
<div style="position:absolute;left:410px;top:528px;width:39px;height:30px;background:linear-gradient(#fafafa,#e4e4e4);border:1px solid #d0d0d0;border-radius:3px;box-shadow:0 1px 1px rgba(0,0,0,.18);"></div>
<svg style="position:absolute;left:416px;top:532px;" width="27" height="22" viewBox="0 0 27 22"><path d="M0 0 H13 L27 11 L13 22 H0 L12 11Z" fill="url(#agg)"/></svg>
<div style="position:absolute;left:552px;top:528px;width:39px;height:30px;background:linear-gradient(#fafafa,#e4e4e4);border:1px solid #d0d0d0;border-radius:3px;box-shadow:0 1px 1px rgba(0,0,0,.18);"></div>
<svg style="position:absolute;left:558px;top:532px;" width="27" height="22" viewBox="0 0 27 22"><path d="M0 0 H13 L27 11 L13 22 H0 L12 11Z" fill="url(#agg)"/></svg>
<div style="position:absolute;left:694px;top:528px;width:39px;height:30px;background:linear-gradient(#fafafa,#e4e4e4);border:1px solid #d0d0d0;border-radius:3px;box-shadow:0 1px 1px rgba(0,0,0,.18);"></div>
<svg style="position:absolute;left:700px;top:532px;" width="27" height="22" viewBox="0 0 27 22"><path d="M0 0 H13 L27 11 L13 22 H0 L12 11Z" fill="url(#agg)"/></svg>
<div style="position:absolute;left:746px;top:515px;width:77px;height:56px;background:linear-gradient(#f6f6f6,#e6e6e6);border:1px solid #d0d0d0;border-radius:3px;box-shadow:0 1px 1px rgba(0,0,0,.2);"></div>
<span style="position:absolute;left:757.0px;top:532.8px;font-size:9px;line-height:11px;color:#222;white-space:nowrap;letter-spacing:-0.20px;">Drag and drop</span>
<span style="position:absolute;left:756.0px;top:542.8px;font-size:9px;line-height:11px;color:#222;white-space:nowrap;letter-spacing:-0.41px;">media files here</span>
<div style="position:absolute;left:837px;top:529px;width:37px;height:28px;background:#e2e2e2;border:1px solid #d2d2d2;border-radius:2px;"></div>
<div style="position:absolute;left:888px;top:515px;width:76px;height:56px;background:#e2e2e2;border:1px solid #d2d2d2;border-radius:2px;"></div>
<div style="position:absolute;left:979px;top:529px;width:37px;height:28px;background:#e2e2e2;border:1px solid #d2d2d2;border-radius:2px;"></div>
<div style="position:absolute;left:910px;top:599px;width:102px;height:18px;background:#e5f1fb;border:2px solid #2a7fd4;"></div>
<svg style="position:absolute;left:918px;top:602px;" width="13" height="12" viewBox="0 0 13 12"><path d="M1.5 6 L5 10.5 L11.5 1.5" fill="none" stroke="#2a8ac8" stroke-width="2.2"/></svg>
<span style="position:absolute;left:936.0px;top:603.0px;font-size:9.5px;line-height:11.5px;color:#000;white-space:nowrap;font-weight:bold;letter-spacing:0.04px;">Apply settings</span>
<div style="position:absolute;left:1022px;top:599px;width:60px;height:18px;background:#e1e1e1;border:1px solid #adadad;"></div>
<span style="position:absolute;left:1039.0px;top:603.0px;font-size:9.5px;line-height:11.5px;color:#111;white-space:nowrap;letter-spacing:-0.60px;">Cancel</span>
<svg style="position:absolute;left:1081px;top:617px;" width="9" height="9" viewBox="0 0 9 9"><g fill="#b5b5b5"><rect x="6" y="0" width="1.5" height="1.5"/><rect x="3" y="3" width="1.5" height="1.5"/><rect x="6" y="3" width="1.5" height="1.5"/><rect x="0" y="6" width="1.5" height="1.5"/><rect x="3" y="6" width="1.5" height="1.5"/><rect x="6" y="6" width="1.5" height="1.5"/></g></svg>
<div style="position:absolute;left:957px;top:429px;width:143px;height:21px;background:#fff;border:1px solid #cfcfcf;border-radius:2px;box-shadow:1px 1px 3px rgba(0,0,0,.25);"></div>
<svg style="position:absolute;left:960px;top:433px;" width="13" height="13" viewBox="0 0 13 13"><path d="M10 9.5 A4.2 4.2 0 1 1 9 3.6" fill="none" stroke="#6a3aa8" stroke-width="2"/><path d="M7 0.8 L11.8 2.6 L8.5 6.3Z" fill="#6a3aa8"/></svg>
<span style="position:absolute;left:975.5px;top:434.6px;font-size:9.5px;line-height:11.5px;color:#333;white-space:nowrap;letter-spacing:-0.13px;">Rotate 90 degrees clockwise</span>
</body></html>
